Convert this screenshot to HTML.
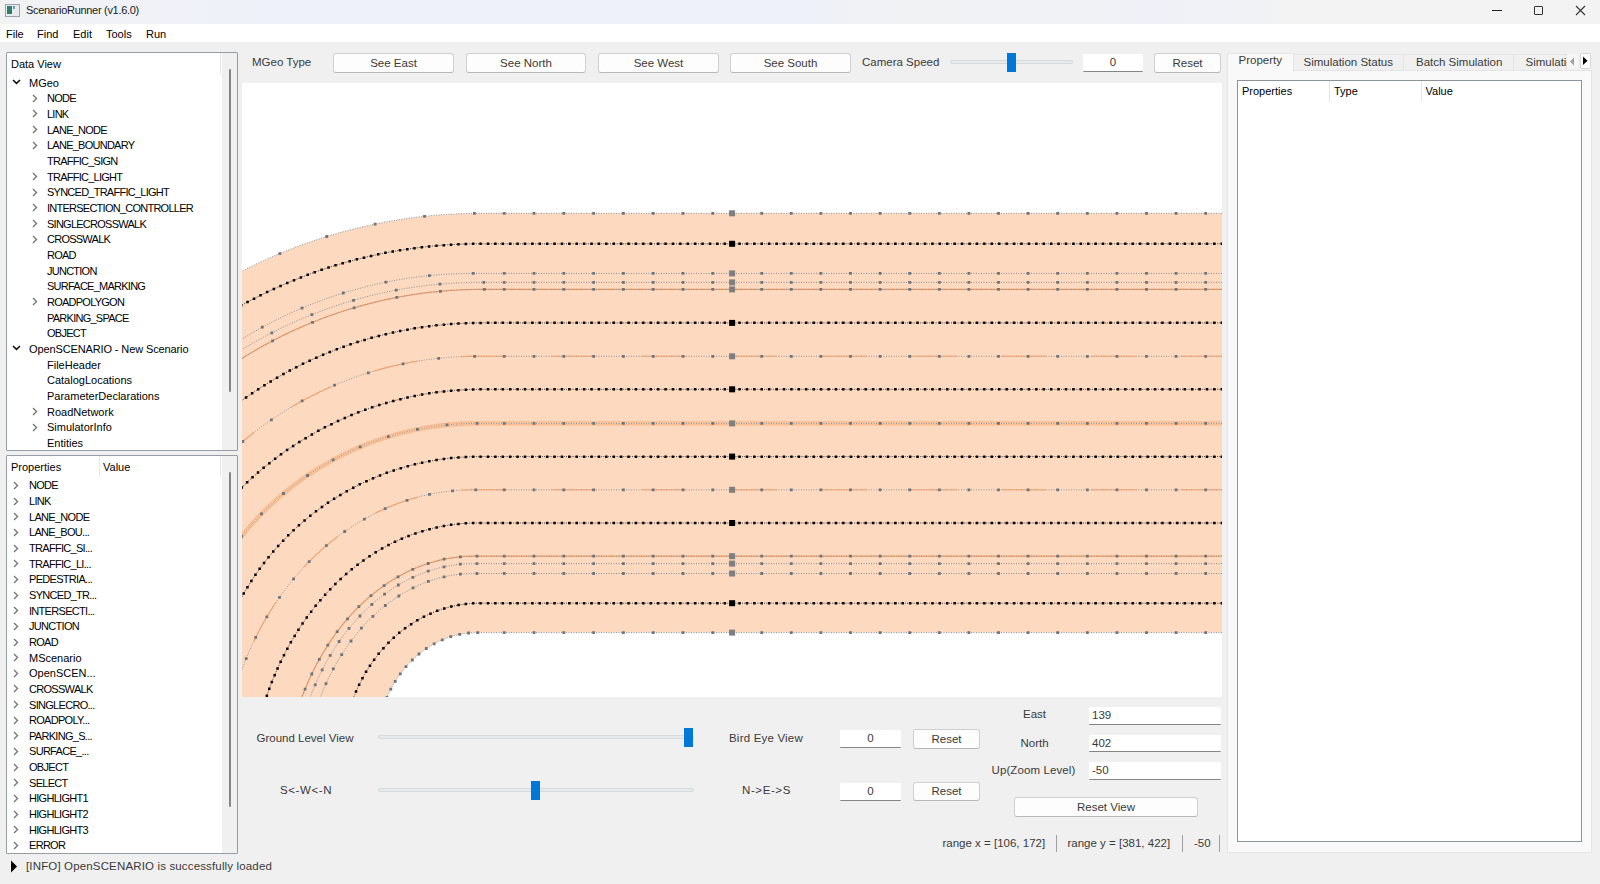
<!DOCTYPE html><html><head><meta charset="utf-8"><style>
html,body{margin:0;padding:0}
body{width:1600px;height:884px;position:relative;overflow:hidden;background:#f0f0f0;font-family:"Liberation Sans",sans-serif}
.t{position:absolute;white-space:nowrap;line-height:1;font-family:"Liberation Sans",sans-serif}
.btn{position:absolute;background:#fdfdfd;border:1px solid #d0d0d0;border-bottom-color:#b8b8b8;border-radius:3px;text-align:center;color:#3a3a3a;white-space:nowrap}
.le{position:absolute;background:#fff;border-bottom:1px solid #858585;border-radius:1px;font-size:11.5px;color:#3a3a3a;white-space:nowrap;box-sizing:content-box}
</style></head><body><div style="position:absolute;left:0;top:0;width:1600px;height:24px;background:linear-gradient(90deg,#f2f2f3 0px,#f0f2f7 90px,#eef1f9 300px,#eef1f9 800px,#f1f2f4 900px,#f1f2f5 1080px,#eff1f8 1150px,#f0f2f7 1220px,#f3f3f3 1300px)"></div>
<div style="position:absolute;left:5px;top:4px;width:13px;height:11px;border:1px solid #9aa3ab;background:#e8eaec"></div>
<div style="position:absolute;left:7px;top:6px;width:5px;height:8px;background:#2f7f6a"></div>
<div style="position:absolute;left:13px;top:6px;width:2px;height:3px;background:#5aa0d0"></div>
<div class="t" style="left:26px;top:5.34px;font-size:11px;color:#1a1a1a;letter-spacing:-0.3px">ScenarioRunner (v1.6.0)</div>
<div style="position:absolute;left:1492px;top:10px;width:10px;height:1px;background:#222"></div>
<div style="position:absolute;left:1534px;top:5.5px;width:7px;height:7px;border:1px solid #333;border-radius:1px"></div>
<svg style="position:absolute;left:1575px;top:4.5px" width="12" height="12"><path d="M1 1L10 10M10 1L1 10" stroke="#333" stroke-width="1.1"/></svg>
<div style="position:absolute;left:0;top:24px;width:1600px;height:18px;background:#fff"></div>
<div class="t" style="left:6px;top:29.24px;font-size:11px;color:#000;">File</div>
<div class="t" style="left:37px;top:29.24px;font-size:11px;color:#000;">Find</div>
<div class="t" style="left:73px;top:29.24px;font-size:11px;color:#000;">Edit</div>
<div class="t" style="left:106px;top:29.24px;font-size:11px;color:#000;">Tools</div>
<div class="t" style="left:146px;top:29.24px;font-size:11px;color:#000;">Run</div>
<div style="position:absolute;left:6px;top:52px;width:230px;height:397px;border:1px solid #979da5;border-radius:1px;background:#fff"></div>
<div style="position:absolute;left:222px;top:53px;width:15px;height:397px;background:#f0f0f0"></div>
<div style="position:absolute;left:229px;top:69px;width:2px;height:323px;background:#858585;border-radius:1px"></div>
<div style="position:absolute;left:220px;top:53px;width:1px;height:21px;background:#e6e6e6"></div>
<div style="position:absolute;left:6px;top:455px;width:230px;height:397px;border:1px solid #979da5;border-radius:1px;background:#fff"></div>
<div style="position:absolute;left:222px;top:456px;width:15px;height:397px;background:#f0f0f0"></div>
<div style="position:absolute;left:229px;top:472px;width:2px;height:335px;background:#858585;border-radius:1px"></div>
<div style="position:absolute;left:220px;top:456px;width:1px;height:21px;background:#e6e6e6"></div>
<div class="t" style="left:11px;top:58.64px;font-size:11px;color:#000;">Data View</div>
<div class="t" style="left:29px;top:77.54px;font-size:11px;color:#000;">MGeo</div>
<svg style="position:absolute;left:11.5px;top:79.0px" width="10" height="6"><path d="M1 1L4.5 4.3L8 1" stroke="#111" stroke-width="1.6" fill="none"/></svg>
<div class="t" style="left:47px;top:93.21px;font-size:11px;color:#000;letter-spacing:-0.75px">NODE</div>
<svg style="position:absolute;left:32px;top:94px" width="6" height="10"><path d="M1 1L4.5 4.5L1 8" stroke="#777" stroke-width="1.4" fill="none"/></svg>
<div class="t" style="left:47px;top:108.88px;font-size:11px;color:#000;letter-spacing:-0.75px">LINK</div>
<svg style="position:absolute;left:32px;top:109px" width="6" height="10"><path d="M1 1L4.5 4.5L1 8" stroke="#777" stroke-width="1.4" fill="none"/></svg>
<div class="t" style="left:47px;top:124.55px;font-size:11px;color:#000;letter-spacing:-0.75px">LANE_NODE</div>
<svg style="position:absolute;left:32px;top:125px" width="6" height="10"><path d="M1 1L4.5 4.5L1 8" stroke="#777" stroke-width="1.4" fill="none"/></svg>
<div class="t" style="left:47px;top:140.22px;font-size:11px;color:#000;letter-spacing:-0.75px">LANE_BOUNDARY</div>
<svg style="position:absolute;left:32px;top:141px" width="6" height="10"><path d="M1 1L4.5 4.5L1 8" stroke="#777" stroke-width="1.4" fill="none"/></svg>
<div class="t" style="left:47px;top:155.89px;font-size:11px;color:#000;letter-spacing:-0.75px">TRAFFIC_SIGN</div>
<div class="t" style="left:47px;top:171.56px;font-size:11px;color:#000;letter-spacing:-0.75px">TRAFFIC_LIGHT</div>
<svg style="position:absolute;left:32px;top:172px" width="6" height="10"><path d="M1 1L4.5 4.5L1 8" stroke="#777" stroke-width="1.4" fill="none"/></svg>
<div class="t" style="left:47px;top:187.23px;font-size:11px;color:#000;letter-spacing:-0.75px">SYNCED_TRAFFIC_LIGHT</div>
<svg style="position:absolute;left:32px;top:188px" width="6" height="10"><path d="M1 1L4.5 4.5L1 8" stroke="#777" stroke-width="1.4" fill="none"/></svg>
<div class="t" style="left:47px;top:202.90px;font-size:11px;color:#000;letter-spacing:-0.75px">INTERSECTION_CONTROLLER</div>
<svg style="position:absolute;left:32px;top:203px" width="6" height="10"><path d="M1 1L4.5 4.5L1 8" stroke="#777" stroke-width="1.4" fill="none"/></svg>
<div class="t" style="left:47px;top:218.57px;font-size:11px;color:#000;letter-spacing:-0.75px">SINGLECROSSWALK</div>
<svg style="position:absolute;left:32px;top:219px" width="6" height="10"><path d="M1 1L4.5 4.5L1 8" stroke="#777" stroke-width="1.4" fill="none"/></svg>
<div class="t" style="left:47px;top:234.24px;font-size:11px;color:#000;letter-spacing:-0.75px">CROSSWALK</div>
<svg style="position:absolute;left:32px;top:235px" width="6" height="10"><path d="M1 1L4.5 4.5L1 8" stroke="#777" stroke-width="1.4" fill="none"/></svg>
<div class="t" style="left:47px;top:249.91px;font-size:11px;color:#000;letter-spacing:-0.75px">ROAD</div>
<div class="t" style="left:47px;top:265.58px;font-size:11px;color:#000;letter-spacing:-0.75px">JUNCTION</div>
<div class="t" style="left:47px;top:281.25px;font-size:11px;color:#000;letter-spacing:-0.75px">SURFACE_MARKING</div>
<div class="t" style="left:47px;top:296.92px;font-size:11px;color:#000;letter-spacing:-0.75px">ROADPOLYGON</div>
<svg style="position:absolute;left:32px;top:297px" width="6" height="10"><path d="M1 1L4.5 4.5L1 8" stroke="#777" stroke-width="1.4" fill="none"/></svg>
<div class="t" style="left:47px;top:312.59px;font-size:11px;color:#000;letter-spacing:-0.75px">PARKING_SPACE</div>
<div class="t" style="left:47px;top:328.26px;font-size:11px;color:#000;letter-spacing:-0.75px">OBJECT</div>
<div class="t" style="left:29px;top:343.93px;font-size:11px;color:#000;letter-spacing:-0.12px">OpenSCENARIO - New Scenario</div>
<svg style="position:absolute;left:11.5px;top:345.39px" width="10" height="6"><path d="M1 1L4.5 4.3L8 1" stroke="#111" stroke-width="1.6" fill="none"/></svg>
<div class="t" style="left:47px;top:359.60px;font-size:11px;color:#000;">FileHeader</div>
<div class="t" style="left:47px;top:375.27px;font-size:11px;color:#000;">CatalogLocations</div>
<div class="t" style="left:47px;top:390.94px;font-size:11px;color:#000;">ParameterDeclarations</div>
<div class="t" style="left:47px;top:406.61px;font-size:11px;color:#000;">RoadNetwork</div>
<svg style="position:absolute;left:32px;top:407px" width="6" height="10"><path d="M1 1L4.5 4.5L1 8" stroke="#777" stroke-width="1.4" fill="none"/></svg>
<div class="t" style="left:47px;top:422.28px;font-size:11px;color:#000;">SimulatorInfo</div>
<svg style="position:absolute;left:32px;top:423px" width="6" height="10"><path d="M1 1L4.5 4.5L1 8" stroke="#777" stroke-width="1.4" fill="none"/></svg>
<div class="t" style="left:47px;top:437.95px;font-size:11px;color:#000;">Entities</div>
<div style="position:absolute;left:99px;top:456px;width:1px;height:21px;background:#e6e6e6"></div>
<div class="t" style="left:11px;top:462.04px;font-size:11px;color:#000;">Properties</div>
<div class="t" style="left:103px;top:462.04px;font-size:11px;color:#000;">Value</div>
<div class="t" style="left:29px;top:480.44px;font-size:11px;color:#000;letter-spacing:-0.7px">NODE</div>
<svg style="position:absolute;left:13px;top:481px" width="6" height="10"><path d="M1 1L4.5 4.5L1 8" stroke="#777" stroke-width="1.4" fill="none"/></svg>
<div class="t" style="left:29px;top:496.09px;font-size:11px;color:#000;letter-spacing:-0.7px">LINK</div>
<svg style="position:absolute;left:13px;top:497px" width="6" height="10"><path d="M1 1L4.5 4.5L1 8" stroke="#777" stroke-width="1.4" fill="none"/></svg>
<div class="t" style="left:29px;top:511.74px;font-size:11px;color:#000;letter-spacing:-0.7px">LANE_NODE</div>
<svg style="position:absolute;left:13px;top:512px" width="6" height="10"><path d="M1 1L4.5 4.5L1 8" stroke="#777" stroke-width="1.4" fill="none"/></svg>
<div class="t" style="left:29px;top:527.39px;font-size:11px;color:#000;letter-spacing:-0.7px">LANE_BOU...</div>
<svg style="position:absolute;left:13px;top:528px" width="6" height="10"><path d="M1 1L4.5 4.5L1 8" stroke="#777" stroke-width="1.4" fill="none"/></svg>
<div class="t" style="left:29px;top:543.04px;font-size:11px;color:#000;letter-spacing:-0.7px">TRAFFIC_SI...</div>
<svg style="position:absolute;left:13px;top:544px" width="6" height="10"><path d="M1 1L4.5 4.5L1 8" stroke="#777" stroke-width="1.4" fill="none"/></svg>
<div class="t" style="left:29px;top:558.69px;font-size:11px;color:#000;letter-spacing:-0.7px">TRAFFIC_LI...</div>
<svg style="position:absolute;left:13px;top:559px" width="6" height="10"><path d="M1 1L4.5 4.5L1 8" stroke="#777" stroke-width="1.4" fill="none"/></svg>
<div class="t" style="left:29px;top:574.34px;font-size:11px;color:#000;letter-spacing:-0.7px">PEDESTRIA...</div>
<svg style="position:absolute;left:13px;top:575px" width="6" height="10"><path d="M1 1L4.5 4.5L1 8" stroke="#777" stroke-width="1.4" fill="none"/></svg>
<div class="t" style="left:29px;top:589.99px;font-size:11px;color:#000;letter-spacing:-0.7px">SYNCED_TR...</div>
<svg style="position:absolute;left:13px;top:591px" width="6" height="10"><path d="M1 1L4.5 4.5L1 8" stroke="#777" stroke-width="1.4" fill="none"/></svg>
<div class="t" style="left:29px;top:605.64px;font-size:11px;color:#000;letter-spacing:-0.7px">INTERSECTI...</div>
<svg style="position:absolute;left:13px;top:606px" width="6" height="10"><path d="M1 1L4.5 4.5L1 8" stroke="#777" stroke-width="1.4" fill="none"/></svg>
<div class="t" style="left:29px;top:621.29px;font-size:11px;color:#000;letter-spacing:-0.7px">JUNCTION</div>
<svg style="position:absolute;left:13px;top:622px" width="6" height="10"><path d="M1 1L4.5 4.5L1 8" stroke="#777" stroke-width="1.4" fill="none"/></svg>
<div class="t" style="left:29px;top:636.94px;font-size:11px;color:#000;letter-spacing:-0.7px">ROAD</div>
<svg style="position:absolute;left:13px;top:638px" width="6" height="10"><path d="M1 1L4.5 4.5L1 8" stroke="#777" stroke-width="1.4" fill="none"/></svg>
<div class="t" style="left:29px;top:652.59px;font-size:11px;color:#000;">MScenario</div>
<svg style="position:absolute;left:13px;top:653px" width="6" height="10"><path d="M1 1L4.5 4.5L1 8" stroke="#777" stroke-width="1.4" fill="none"/></svg>
<div class="t" style="left:29px;top:668.24px;font-size:11px;color:#000;">OpenSCEN...</div>
<svg style="position:absolute;left:13px;top:669px" width="6" height="10"><path d="M1 1L4.5 4.5L1 8" stroke="#777" stroke-width="1.4" fill="none"/></svg>
<div class="t" style="left:29px;top:683.89px;font-size:11px;color:#000;letter-spacing:-0.7px">CROSSWALK</div>
<svg style="position:absolute;left:13px;top:684px" width="6" height="10"><path d="M1 1L4.5 4.5L1 8" stroke="#777" stroke-width="1.4" fill="none"/></svg>
<div class="t" style="left:29px;top:699.54px;font-size:11px;color:#000;letter-spacing:-0.7px">SINGLECRO...</div>
<svg style="position:absolute;left:13px;top:700px" width="6" height="10"><path d="M1 1L4.5 4.5L1 8" stroke="#777" stroke-width="1.4" fill="none"/></svg>
<div class="t" style="left:29px;top:715.19px;font-size:11px;color:#000;letter-spacing:-0.7px">ROADPOLY...</div>
<svg style="position:absolute;left:13px;top:716px" width="6" height="10"><path d="M1 1L4.5 4.5L1 8" stroke="#777" stroke-width="1.4" fill="none"/></svg>
<div class="t" style="left:29px;top:730.84px;font-size:11px;color:#000;letter-spacing:-0.7px">PARKING_S...</div>
<svg style="position:absolute;left:13px;top:731px" width="6" height="10"><path d="M1 1L4.5 4.5L1 8" stroke="#777" stroke-width="1.4" fill="none"/></svg>
<div class="t" style="left:29px;top:746.49px;font-size:11px;color:#000;letter-spacing:-0.7px">SURFACE_...</div>
<svg style="position:absolute;left:13px;top:747px" width="6" height="10"><path d="M1 1L4.5 4.5L1 8" stroke="#777" stroke-width="1.4" fill="none"/></svg>
<div class="t" style="left:29px;top:762.14px;font-size:11px;color:#000;letter-spacing:-0.7px">OBJECT</div>
<svg style="position:absolute;left:13px;top:763px" width="6" height="10"><path d="M1 1L4.5 4.5L1 8" stroke="#777" stroke-width="1.4" fill="none"/></svg>
<div class="t" style="left:29px;top:777.79px;font-size:11px;color:#000;letter-spacing:-0.7px">SELECT</div>
<svg style="position:absolute;left:13px;top:778px" width="6" height="10"><path d="M1 1L4.5 4.5L1 8" stroke="#777" stroke-width="1.4" fill="none"/></svg>
<div class="t" style="left:29px;top:793.44px;font-size:11px;color:#000;letter-spacing:-0.7px">HIGHLIGHT1</div>
<svg style="position:absolute;left:13px;top:794px" width="6" height="10"><path d="M1 1L4.5 4.5L1 8" stroke="#777" stroke-width="1.4" fill="none"/></svg>
<div class="t" style="left:29px;top:809.09px;font-size:11px;color:#000;letter-spacing:-0.7px">HIGHLIGHT2</div>
<svg style="position:absolute;left:13px;top:810px" width="6" height="10"><path d="M1 1L4.5 4.5L1 8" stroke="#777" stroke-width="1.4" fill="none"/></svg>
<div class="t" style="left:29px;top:824.74px;font-size:11px;color:#000;letter-spacing:-0.7px">HIGHLIGHT3</div>
<svg style="position:absolute;left:13px;top:825px" width="6" height="10"><path d="M1 1L4.5 4.5L1 8" stroke="#777" stroke-width="1.4" fill="none"/></svg>
<div class="t" style="left:29px;top:840.39px;font-size:11px;color:#000;letter-spacing:-0.7px">ERROR</div>
<svg style="position:absolute;left:13px;top:841px" width="6" height="10"><path d="M1 1L4.5 4.5L1 8" stroke="#777" stroke-width="1.4" fill="none"/></svg>
<svg style="position:absolute;left:10px;top:860px" width="9" height="13"><path d="M1 0.5L7 6.5L1 12.5Z" fill="#000"/></svg>
<div class="t" style="left:26px;top:860.59px;font-size:11.5px;color:#3a3a3a;letter-spacing:0.15px">[INFO] OpenSCENARIO is successfully loaded</div>
<div class="t" style="left:252px;top:56.59px;font-size:11.5px;color:#3a3a3a;">MGeo Type</div>
<div class="btn" style="left:333px;top:53px;width:119px;height:18px;line-height:18px;font-size:11.5px">See East</div>
<div class="btn" style="left:466px;top:53px;width:118px;height:18px;line-height:18px;font-size:11.5px">See North</div>
<div class="btn" style="left:598px;top:53px;width:119px;height:18px;line-height:18px;font-size:11.5px">See West</div>
<div class="btn" style="left:730px;top:53px;width:119px;height:18px;line-height:18px;font-size:11.5px">See South</div>
<div class="t" style="left:862px;top:56.59px;font-size:11.5px;color:#3a3a3a;">Camera Speed</div>
<div style="position:absolute;left:950px;top:60px;width:121px;height:2px;border:1px solid #d6d9dc;background:#e7eaea;border-radius:2px"></div><div style="position:absolute;left:1006.5px;top:52.5px;width:9px;height:19px;background:#0078d7"></div>
<div class="le" style="left:1083px;top:54px;width:60px;height:17px;line-height:17px;text-align:center;padding-left:0px">0</div>
<div class="btn" style="left:1154px;top:53px;width:65px;height:18px;line-height:18px;font-size:11.5px">Reset</div>
<div style="position:absolute;left:242px;top:83px;width:980px;height:614px;background:#fff;overflow:hidden">
<svg width="980" height="614" viewBox="242 83 980 614" style="position:absolute;left:0;top:0;display:block"><path d="M1222.0 213.3 L480.4 213.3 L478.4 213.3 L476.4 213.3 L474.4 213.3 L472.4 213.4 L470.4 213.4 L468.4 213.4 L466.4 213.5 L464.4 213.5 L462.4 213.6 L460.4 213.7 L458.4 213.8 L456.4 213.9 L454.4 214.0 L452.4 214.1 L450.4 214.2 L448.4 214.3 L446.4 214.4 L444.4 214.5 L442.4 214.7 L440.4 214.8 L438.4 215.0 L436.5 215.2 L434.5 215.3 L432.5 215.5 L430.5 215.7 L428.5 215.9 L426.5 216.1 L424.5 216.3 L422.5 216.5 L420.5 216.8 L418.5 217.0 L416.6 217.2 L414.6 217.5 L412.6 217.7 L410.6 218.0 L408.6 218.3 L406.6 218.6 L404.7 218.8 L402.7 219.1 L400.7 219.4 L398.7 219.8 L396.8 220.1 L394.8 220.4 L392.8 220.7 L390.8 221.1 L388.9 221.4 L386.9 221.8 L384.9 222.1 L383.0 222.5 L381.0 222.9 L379.1 223.3 L377.1 223.7 L375.1 224.1 L373.2 224.5 L371.2 224.9 L369.3 225.3 L367.3 225.8 L365.4 226.2 L363.4 226.6 L361.5 227.1 L359.5 227.6 L357.6 228.0 L355.6 228.5 L353.7 229.0 L351.8 229.5 L349.8 230.0 L347.9 230.5 L345.9 231.0 L344.0 231.5 L342.1 232.0 L340.2 232.6 L338.2 233.1 L336.3 233.7 L334.4 234.2 L332.5 234.8 L330.6 235.4 L328.6 235.9 L326.7 236.5 L324.8 237.1 L322.9 237.7 L321.0 238.3 L319.1 239.0 L317.2 239.6 L315.3 240.2 L313.4 240.9 L311.5 241.5 L309.6 242.2 L307.7 242.8 L305.9 243.5 L304.0 244.2 L302.1 244.8 L300.2 245.5 L298.3 246.2 L296.5 246.9 L294.6 247.6 L292.7 248.4 L290.9 249.1 L289.0 249.8 L287.2 250.6 L285.3 251.3 L283.4 252.1 L281.6 252.8 L279.8 253.6 L277.9 254.4 L276.1 255.1 L274.2 255.9 L272.4 256.7 L270.6 257.5 L268.7 258.3 L266.9 259.2 L265.1 260.0 L263.3 260.8 L261.5 261.7 L259.6 262.5 L257.8 263.4 L256.0 264.2 L254.2 265.1 L252.4 266.0 L250.6 266.8 L248.8 267.7 L247.0 268.6 L245.3 269.5 L243.5 270.4 L241.7 271.3 L239.9 272.3 L238.2 273.2 L236.4 274.1 L234.6 275.1 L232.9 276.0 L231.1 277.0 L229.9 277.6 L230.0 709.0 L382.5 709.0 L382.6 708.9 L383.2 707.0 L383.9 705.1 L384.6 703.2 L385.3 701.3 L386.0 699.5 L386.8 697.6 L387.6 695.8 L388.4 694.0 L389.3 692.2 L390.2 690.4 L391.1 688.6 L392.0 686.8 L393.0 685.1 L394.0 683.4 L395.0 681.6 L396.1 679.9 L397.2 678.3 L398.3 676.6 L399.5 675.0 L400.6 673.4 L401.8 671.8 L403.1 670.2 L404.3 668.6 L405.6 667.1 L406.9 665.6 L408.3 664.1 L409.7 662.7 L411.0 661.2 L412.5 659.8 L413.9 658.4 L415.4 657.1 L416.9 655.8 L418.4 654.5 L420.0 653.2 L421.6 652.0 L423.2 650.8 L424.8 649.6 L426.4 648.5 L428.1 647.4 L429.8 646.3 L431.5 645.3 L433.2 644.3 L435.0 643.3 L436.8 642.4 L438.6 641.5 L440.4 640.7 L442.2 639.9 L444.0 639.1 L445.9 638.4 L447.8 637.7 L449.7 637.0 L451.6 636.4 L453.5 635.9 L455.4 635.4 L457.4 634.9 L459.3 634.4 L461.3 634.1 L463.3 633.7 L465.2 633.4 L467.2 633.2 L469.2 633.0 L471.2 632.8 L473.2 632.7 L475.2 632.6 L477.2 632.6 L1222.0 632.6 Z" fill="#fdd9bf"/><path d="M1227.0 213.3 L480.4 213.3 L478.4 213.3 L476.4 213.3 L474.4 213.3 L472.4 213.4 L470.4 213.4 L468.4 213.4 L466.4 213.5 L464.4 213.5 L462.4 213.6 L460.4 213.7 L458.4 213.8 L456.4 213.9 L454.4 214.0 L452.4 214.1 L450.4 214.2 L448.4 214.3 L446.4 214.4 L444.4 214.5 L442.4 214.7 L440.4 214.8 L438.4 215.0 L436.5 215.2 L434.5 215.3 L432.5 215.5 L430.5 215.7 L428.5 215.9 L426.5 216.1 L424.5 216.3 L422.5 216.5 L420.5 216.8 L418.5 217.0 L416.6 217.2 L414.6 217.5 L412.6 217.7 L410.6 218.0 L408.6 218.3 L406.6 218.6 L404.7 218.8 L402.7 219.1 L400.7 219.4 L398.7 219.8 L396.8 220.1 L394.8 220.4 L392.8 220.7 L390.8 221.1 L388.9 221.4 L386.9 221.8 L384.9 222.1 L383.0 222.5 L381.0 222.9 L379.1 223.3 L377.1 223.7 L375.1 224.1 L373.2 224.5 L371.2 224.9 L369.3 225.3 L367.3 225.8 L365.4 226.2 L363.4 226.6 L361.5 227.1 L359.5 227.6 L357.6 228.0 L355.6 228.5 L353.7 229.0 L351.8 229.5 L349.8 230.0 L347.9 230.5 L345.9 231.0 L344.0 231.5 L342.1 232.0 L340.2 232.6 L338.2 233.1 L336.3 233.7 L334.4 234.2 L332.5 234.8 L330.6 235.4 L328.6 235.9 L326.7 236.5 L324.8 237.1 L322.9 237.7 L321.0 238.3 L319.1 239.0 L317.2 239.6 L315.3 240.2 L313.4 240.9 L311.5 241.5 L309.6 242.2 L307.7 242.8 L305.9 243.5 L304.0 244.2 L302.1 244.8 L300.2 245.5 L298.3 246.2 L296.5 246.9 L294.6 247.6 L292.7 248.4 L290.9 249.1 L289.0 249.8 L287.2 250.6 L285.3 251.3 L283.4 252.1 L281.6 252.8 L279.8 253.6 L277.9 254.4 L276.1 255.1 L274.2 255.9 L272.4 256.7 L270.6 257.5 L268.7 258.3 L266.9 259.2 L265.1 260.0 L263.3 260.8 L261.5 261.7 L259.6 262.5 L257.8 263.4 L256.0 264.2 L254.2 265.1 L252.4 266.0 L250.6 266.8 L248.8 267.7 L247.0 268.6 L245.3 269.5 L243.5 270.4 L241.7 271.3 L239.9 272.3 L238.2 273.2 L236.4 274.1 L234.6 275.1 L232.9 276.0 L231.1 277.0 L229.9 277.6" fill="none" stroke="#6a7a88" stroke-width="1" stroke-dasharray="1 1.5" opacity="0.8"/><path fill="#6c747c" d="M760.3 211.9h2.8v2.8h-2.8zM789.9 211.9h2.8v2.8h-2.8zM819.5 211.9h2.8v2.8h-2.8zM849.1 211.9h2.8v2.8h-2.8zM878.7 211.9h2.8v2.8h-2.8zM908.3 211.9h2.8v2.8h-2.8zM937.9 211.9h2.8v2.8h-2.8zM967.5 211.9h2.8v2.8h-2.8zM997.1 211.9h2.8v2.8h-2.8zM1026.7 211.9h2.8v2.8h-2.8zM1056.3 211.9h2.8v2.8h-2.8zM1085.9 211.9h2.8v2.8h-2.8zM1115.5 211.9h2.8v2.8h-2.8zM1145.1 211.9h2.8v2.8h-2.8zM1174.7 211.9h2.8v2.8h-2.8zM1204.3 211.9h2.8v2.8h-2.8zM711.4 211.9h2.8v2.8h-2.8zM681.6 211.9h2.8v2.8h-2.8zM651.8 211.9h2.8v2.8h-2.8zM622.0 211.9h2.8v2.8h-2.8zM592.2 211.9h2.8v2.8h-2.8zM562.4 211.9h2.8v2.8h-2.8zM532.6 211.9h2.8v2.8h-2.8zM502.8 211.9h2.8v2.8h-2.8zM473.0 211.9h2.8v2.8h-2.8zM423.1 214.9h2.8v2.8h-2.8zM373.7 222.7h2.8v2.8h-2.8zM325.3 235.1h2.8v2.8h-2.8zM278.4 252.2h2.8v2.8h-2.8z"/><rect x="729.1" y="210.3" width="6" height="6" fill="#7f7f7f"/><path d="M1227.0 243.8 L479.6 243.8 L477.6 243.8 L475.6 243.8 L473.6 243.8 L471.6 243.9 L469.6 243.9 L467.6 243.9 L465.6 244.0 L463.6 244.1 L461.6 244.1 L459.6 244.2 L457.6 244.3 L455.6 244.4 L453.6 244.5 L451.6 244.6 L449.6 244.7 L447.6 244.8 L445.6 245.0 L443.6 245.1 L441.6 245.3 L439.6 245.4 L437.7 245.6 L435.7 245.8 L433.7 246.0 L431.7 246.1 L429.7 246.3 L427.7 246.5 L425.7 246.8 L423.7 247.0 L421.7 247.2 L419.7 247.5 L417.8 247.7 L415.8 248.0 L413.8 248.2 L411.8 248.5 L409.8 248.8 L407.9 249.1 L405.9 249.4 L403.9 249.7 L401.9 250.0 L400.0 250.3 L398.0 250.6 L396.0 251.0 L394.0 251.3 L392.1 251.7 L390.1 252.0 L388.1 252.4 L386.2 252.8 L384.2 253.1 L382.2 253.5 L380.3 253.9 L378.3 254.4 L376.4 254.8 L374.4 255.2 L372.5 255.6 L370.5 256.1 L368.6 256.5 L366.6 257.0 L364.7 257.4 L362.7 257.9 L360.8 258.4 L358.8 258.9 L356.9 259.4 L355.0 259.9 L353.0 260.4 L351.1 260.9 L349.2 261.4 L347.3 262.0 L345.3 262.5 L343.4 263.1 L341.5 263.6 L339.6 264.2 L337.7 264.8 L335.7 265.3 L333.8 265.9 L331.9 266.5 L330.0 267.1 L328.1 267.7 L326.2 268.4 L324.3 269.0 L322.4 269.6 L320.5 270.3 L318.6 270.9 L316.7 271.6 L314.9 272.2 L313.0 272.9 L311.1 273.6 L309.2 274.3 L307.3 275.0 L305.5 275.7 L303.6 276.4 L301.7 277.1 L299.9 277.9 L298.0 278.6 L296.2 279.3 L294.3 280.1 L292.5 280.8 L290.6 281.6 L288.8 282.4 L286.9 283.2 L285.1 283.9 L283.2 284.7 L281.4 285.5 L279.6 286.4 L277.8 287.2 L275.9 288.0 L274.1 288.8 L272.3 289.7 L270.5 290.5 L268.7 291.4 L266.9 292.2 L265.1 293.1 L263.3 294.0 L261.5 294.9 L259.7 295.8 L257.9 296.7 L256.1 297.6 L254.3 298.5 L252.6 299.4 L250.8 300.3 L249.0 301.3 L247.3 302.2 L245.5 303.2 L243.8 304.1 L242.0 305.1 L240.3 306.0 L238.5 307.0 L236.8 308.0 L235.0 309.0 L233.3 310.0 L231.6 311.0 L229.9 312.0" fill="none" stroke="#000" stroke-width="1" stroke-dasharray="1 1.2" opacity="0.7"/><path fill="#000" d="M730.9 242.6h2.5v2.5h-2.5zM738.3 242.6h2.5v2.5h-2.5zM745.7 242.6h2.5v2.5h-2.5zM753.1 242.6h2.5v2.5h-2.5zM760.5 242.6h2.5v2.5h-2.5zM767.9 242.6h2.5v2.5h-2.5zM775.4 242.6h2.5v2.5h-2.5zM782.8 242.6h2.5v2.5h-2.5zM790.2 242.6h2.5v2.5h-2.5zM797.6 242.6h2.5v2.5h-2.5zM805.0 242.6h2.5v2.5h-2.5zM812.5 242.6h2.5v2.5h-2.5zM819.9 242.6h2.5v2.5h-2.5zM827.3 242.6h2.5v2.5h-2.5zM834.7 242.6h2.5v2.5h-2.5zM842.1 242.6h2.5v2.5h-2.5zM849.6 242.6h2.5v2.5h-2.5zM857.0 242.6h2.5v2.5h-2.5zM864.4 242.6h2.5v2.5h-2.5zM871.8 242.6h2.5v2.5h-2.5zM879.2 242.6h2.5v2.5h-2.5zM886.7 242.6h2.5v2.5h-2.5zM894.1 242.6h2.5v2.5h-2.5zM901.5 242.6h2.5v2.5h-2.5zM908.9 242.6h2.5v2.5h-2.5zM916.3 242.6h2.5v2.5h-2.5zM923.8 242.6h2.5v2.5h-2.5zM931.2 242.6h2.5v2.5h-2.5zM938.6 242.6h2.5v2.5h-2.5zM946.0 242.6h2.5v2.5h-2.5zM953.4 242.6h2.5v2.5h-2.5zM960.9 242.6h2.5v2.5h-2.5zM968.3 242.6h2.5v2.5h-2.5zM975.7 242.6h2.5v2.5h-2.5zM983.1 242.6h2.5v2.5h-2.5zM990.5 242.6h2.5v2.5h-2.5zM998.0 242.6h2.5v2.5h-2.5zM1005.4 242.6h2.5v2.5h-2.5zM1012.8 242.6h2.5v2.5h-2.5zM1020.2 242.6h2.5v2.5h-2.5zM1027.6 242.6h2.5v2.5h-2.5zM1035.1 242.6h2.5v2.5h-2.5zM1042.5 242.6h2.5v2.5h-2.5zM1049.9 242.6h2.5v2.5h-2.5zM1057.3 242.6h2.5v2.5h-2.5zM1064.7 242.6h2.5v2.5h-2.5zM1072.2 242.6h2.5v2.5h-2.5zM1079.6 242.6h2.5v2.5h-2.5zM1087.0 242.6h2.5v2.5h-2.5zM1094.4 242.6h2.5v2.5h-2.5zM1101.8 242.6h2.5v2.5h-2.5zM1109.3 242.6h2.5v2.5h-2.5zM1116.7 242.6h2.5v2.5h-2.5zM1124.1 242.6h2.5v2.5h-2.5zM1131.5 242.6h2.5v2.5h-2.5zM1138.9 242.6h2.5v2.5h-2.5zM1146.4 242.6h2.5v2.5h-2.5zM1153.8 242.6h2.5v2.5h-2.5zM1161.2 242.6h2.5v2.5h-2.5zM1168.6 242.6h2.5v2.5h-2.5zM1176.0 242.6h2.5v2.5h-2.5zM1183.5 242.6h2.5v2.5h-2.5zM1190.9 242.6h2.5v2.5h-2.5zM1198.3 242.6h2.5v2.5h-2.5zM1205.7 242.6h2.5v2.5h-2.5zM1213.1 242.6h2.5v2.5h-2.5zM1220.6 242.6h2.5v2.5h-2.5zM723.5 242.6h2.5v2.5h-2.5zM716.1 242.6h2.5v2.5h-2.5zM708.7 242.6h2.5v2.5h-2.5zM701.3 242.6h2.5v2.5h-2.5zM693.9 242.6h2.5v2.5h-2.5zM686.5 242.6h2.5v2.5h-2.5zM679.1 242.6h2.5v2.5h-2.5zM671.7 242.6h2.5v2.5h-2.5zM664.3 242.6h2.5v2.5h-2.5zM656.9 242.6h2.5v2.5h-2.5zM649.5 242.6h2.5v2.5h-2.5zM642.1 242.6h2.5v2.5h-2.5zM634.7 242.6h2.5v2.5h-2.5zM627.3 242.6h2.5v2.5h-2.5zM619.9 242.6h2.5v2.5h-2.5zM612.5 242.6h2.5v2.5h-2.5zM605.1 242.6h2.5v2.5h-2.5zM597.7 242.6h2.5v2.5h-2.5zM590.3 242.6h2.5v2.5h-2.5zM582.9 242.6h2.5v2.5h-2.5zM575.5 242.6h2.5v2.5h-2.5zM568.1 242.6h2.5v2.5h-2.5zM560.7 242.6h2.5v2.5h-2.5zM553.3 242.6h2.5v2.5h-2.5zM545.9 242.6h2.5v2.5h-2.5zM538.5 242.6h2.5v2.5h-2.5zM531.1 242.6h2.5v2.5h-2.5zM523.7 242.6h2.5v2.5h-2.5zM516.3 242.6h2.5v2.5h-2.5zM508.9 242.6h2.5v2.5h-2.5zM501.5 242.6h2.5v2.5h-2.5zM494.1 242.6h2.5v2.5h-2.5zM486.7 242.6h2.5v2.5h-2.5zM479.3 242.6h2.5v2.5h-2.5zM471.9 242.6h2.5v2.5h-2.5zM464.5 242.7h2.5v2.5h-2.5zM457.2 243.0h2.5v2.5h-2.5zM449.8 243.4h2.5v2.5h-2.5zM442.5 243.9h2.5v2.5h-2.5zM435.2 244.5h2.5v2.5h-2.5zM427.8 245.2h2.5v2.5h-2.5zM420.5 246.0h2.5v2.5h-2.5zM413.2 246.9h2.5v2.5h-2.5zM406.0 247.9h2.5v2.5h-2.5zM398.7 249.0h2.5v2.5h-2.5zM391.5 250.3h2.5v2.5h-2.5zM384.2 251.6h2.5v2.5h-2.5zM377.0 253.1h2.5v2.5h-2.5zM369.9 254.7h2.5v2.5h-2.5zM362.7 256.4h2.5v2.5h-2.5zM355.6 258.1h2.5v2.5h-2.5zM348.5 260.0h2.5v2.5h-2.5zM341.4 262.0h2.5v2.5h-2.5zM334.3 264.1h2.5v2.5h-2.5zM327.3 266.3h2.5v2.5h-2.5zM320.4 268.6h2.5v2.5h-2.5zM313.4 271.1h2.5v2.5h-2.5zM306.5 273.6h2.5v2.5h-2.5zM299.6 276.2h2.5v2.5h-2.5zM292.8 278.9h2.5v2.5h-2.5zM286.0 281.8h2.5v2.5h-2.5zM279.3 284.7h2.5v2.5h-2.5zM272.6 287.7h2.5v2.5h-2.5zM265.9 290.8h2.5v2.5h-2.5zM259.3 294.1h2.5v2.5h-2.5zM252.8 297.4h2.5v2.5h-2.5zM246.3 300.8h2.5v2.5h-2.5zM239.8 304.3h2.5v2.5h-2.5z"/><rect x="729.1" y="240.8" width="6" height="6" fill="#000"/><path d="M1227.0 273.4 L473.3 273.4 L471.3 273.4 L469.3 273.4 L467.3 273.4 L465.3 273.5 L463.3 273.5 L461.3 273.6 L459.3 273.6 L457.3 273.7 L455.3 273.8 L453.3 273.9 L451.3 273.9 L449.3 274.1 L447.3 274.2 L445.3 274.3 L443.3 274.4 L441.3 274.6 L439.3 274.7 L437.3 274.9 L435.3 275.0 L433.4 275.2 L431.4 275.4 L429.4 275.6 L427.4 275.8 L425.4 276.0 L423.4 276.2 L421.4 276.5 L419.4 276.7 L417.5 277.0 L415.5 277.2 L413.5 277.5 L411.5 277.8 L409.5 278.0 L407.5 278.3 L405.6 278.6 L403.6 279.0 L401.6 279.3 L399.6 279.6 L397.7 279.9 L395.7 280.3 L393.7 280.6 L391.8 281.0 L389.8 281.4 L387.8 281.8 L385.9 282.2 L383.9 282.6 L382.0 283.0 L380.0 283.4 L378.1 283.8 L376.1 284.3 L374.2 284.7 L372.2 285.2 L370.3 285.6 L368.3 286.1 L366.4 286.6 L364.4 287.1 L362.5 287.6 L360.6 288.1 L358.6 288.6 L356.7 289.1 L354.8 289.7 L352.9 290.2 L350.9 290.7 L349.0 291.3 L347.1 291.9 L345.2 292.5 L343.3 293.0 L341.4 293.6 L339.5 294.2 L337.5 294.9 L335.6 295.5 L333.7 296.1 L331.9 296.7 L330.0 297.4 L328.1 298.0 L326.2 298.7 L324.3 299.4 L322.4 300.1 L320.5 300.8 L318.7 301.5 L316.8 302.2 L314.9 302.9 L313.1 303.6 L311.2 304.3 L309.3 305.1 L307.5 305.8 L305.6 306.6 L303.8 307.3 L302.0 308.1 L300.1 308.9 L298.3 309.7 L296.4 310.5 L294.6 311.3 L292.8 312.1 L291.0 312.9 L289.1 313.8 L287.3 314.6 L285.5 315.5 L283.7 316.3 L281.9 317.2 L280.1 318.1 L278.3 318.9 L276.5 319.8 L274.7 320.7 L273.0 321.6 L271.2 322.5 L269.4 323.5 L267.6 324.4 L265.9 325.3 L264.1 326.3 L262.3 327.2 L260.6 328.2 L258.8 329.2 L257.1 330.2 L255.4 331.1 L253.6 332.1 L251.9 333.1 L250.2 334.1 L248.4 335.2 L246.7 336.2 L245.0 337.2 L243.3 338.3 L241.6 339.3 L239.9 340.4 L238.2 341.4 L236.5 342.5 L234.8 343.6 L233.2 344.7 L231.5 345.8 L230.0 346.8" fill="none" stroke="#6a7a88" stroke-width="1" stroke-dasharray="1 1.5" opacity="0.8"/><path fill="#6c747c" d="M760.3 272.0h2.8v2.8h-2.8zM789.9 272.0h2.8v2.8h-2.8zM819.5 272.0h2.8v2.8h-2.8zM849.1 272.0h2.8v2.8h-2.8zM878.7 272.0h2.8v2.8h-2.8zM908.3 272.0h2.8v2.8h-2.8zM937.9 272.0h2.8v2.8h-2.8zM967.5 272.0h2.8v2.8h-2.8zM997.1 272.0h2.8v2.8h-2.8zM1026.7 272.0h2.8v2.8h-2.8zM1056.3 272.0h2.8v2.8h-2.8zM1085.9 272.0h2.8v2.8h-2.8zM1115.5 272.0h2.8v2.8h-2.8zM1145.1 272.0h2.8v2.8h-2.8zM1174.7 272.0h2.8v2.8h-2.8zM1204.3 272.0h2.8v2.8h-2.8zM711.4 272.0h2.8v2.8h-2.8zM681.6 272.0h2.8v2.8h-2.8zM651.8 272.0h2.8v2.8h-2.8zM622.0 272.0h2.8v2.8h-2.8zM592.2 272.0h2.8v2.8h-2.8zM562.4 272.0h2.8v2.8h-2.8zM532.6 272.0h2.8v2.8h-2.8zM502.8 272.0h2.8v2.8h-2.8zM471.9 272.0h2.8v2.8h-2.8zM428.0 274.2h2.8v2.8h-2.8zM384.5 280.8h2.8v2.8h-2.8zM341.9 291.6h2.8v2.8h-2.8zM300.6 306.7h2.8v2.8h-2.8zM260.9 325.8h2.8v2.8h-2.8z"/><rect x="729.1" y="270.4" width="6" height="6" fill="#7f7f7f"/><path d="M1227.0 282.4 L479.8 282.4 L477.8 282.4 L475.8 282.4 L473.8 282.4 L471.8 282.5 L469.8 282.5 L467.8 282.6 L465.8 282.6 L463.8 282.7 L461.8 282.8 L459.8 282.8 L457.8 282.9 L455.8 283.0 L453.8 283.1 L451.8 283.3 L449.8 283.4 L447.8 283.5 L445.8 283.7 L443.8 283.8 L441.8 284.0 L439.9 284.2 L437.9 284.3 L435.9 284.5 L433.9 284.7 L431.9 284.9 L429.9 285.1 L427.9 285.4 L425.9 285.6 L423.9 285.8 L422.0 286.1 L420.0 286.4 L418.0 286.6 L416.0 286.9 L414.0 287.2 L412.1 287.5 L410.1 287.8 L408.1 288.1 L406.1 288.4 L404.2 288.7 L402.2 289.1 L400.2 289.4 L398.2 289.8 L396.3 290.1 L394.3 290.5 L392.3 290.9 L390.4 291.3 L388.4 291.7 L386.5 292.1 L384.5 292.5 L382.6 292.9 L380.6 293.4 L378.7 293.8 L376.7 294.2 L374.8 294.7 L372.8 295.2 L370.9 295.6 L368.9 296.1 L367.0 296.6 L365.1 297.1 L363.1 297.6 L361.2 298.1 L359.3 298.7 L357.3 299.2 L355.4 299.8 L353.5 300.3 L351.6 300.9 L349.6 301.4 L347.7 302.0 L345.8 302.6 L343.9 303.2 L342.0 303.8 L340.1 304.4 L338.2 305.0 L336.3 305.6 L334.4 306.3 L332.5 306.9 L330.6 307.6 L328.7 308.2 L326.8 308.9 L325.0 309.6 L323.1 310.3 L321.2 311.0 L319.3 311.7 L317.5 312.4 L315.6 313.1 L313.7 313.8 L311.9 314.6 L310.0 315.3 L308.2 316.1 L306.3 316.8 L304.5 317.6 L302.6 318.4 L300.8 319.1 L298.9 319.9 L297.1 320.7 L295.3 321.5 L293.5 322.4 L291.6 323.2 L289.8 324.0 L288.0 324.9 L286.2 325.7 L284.4 326.6 L282.6 327.4 L280.8 328.3 L279.0 329.2 L277.2 330.1 L275.4 331.0 L273.6 331.9 L271.8 332.8 L270.1 333.7 L268.3 334.6 L266.5 335.5 L264.8 336.5 L263.0 337.4 L261.2 338.4 L259.5 339.4 L257.7 340.3 L256.0 341.3 L254.3 342.3 L252.5 343.3 L250.8 344.3 L249.1 345.3 L247.4 346.3 L245.6 347.4 L243.9 348.4 L242.2 349.4 L240.5 350.5 L238.8 351.5 L237.1 352.6 L235.4 353.7 L233.8 354.8 L232.1 355.8 L230.4 356.9 L229.9 357.3" fill="none" stroke="#6a7a88" stroke-width="1" stroke-dasharray="1 1.5" opacity="0.8"/><path fill="#6c747c" d="M760.3 281.0h2.8v2.8h-2.8zM789.9 281.0h2.8v2.8h-2.8zM819.5 281.0h2.8v2.8h-2.8zM849.1 281.0h2.8v2.8h-2.8zM878.7 281.0h2.8v2.8h-2.8zM908.3 281.0h2.8v2.8h-2.8zM937.9 281.0h2.8v2.8h-2.8zM967.5 281.0h2.8v2.8h-2.8zM997.1 281.0h2.8v2.8h-2.8zM1026.7 281.0h2.8v2.8h-2.8zM1056.3 281.0h2.8v2.8h-2.8zM1085.9 281.0h2.8v2.8h-2.8zM1115.5 281.0h2.8v2.8h-2.8zM1145.1 281.0h2.8v2.8h-2.8zM1174.7 281.0h2.8v2.8h-2.8zM1204.3 281.0h2.8v2.8h-2.8zM711.4 281.0h2.8v2.8h-2.8zM681.6 281.0h2.8v2.8h-2.8zM651.8 281.0h2.8v2.8h-2.8zM622.0 281.0h2.8v2.8h-2.8zM592.2 281.0h2.8v2.8h-2.8zM562.4 281.0h2.8v2.8h-2.8zM532.6 281.0h2.8v2.8h-2.8zM502.8 281.0h2.8v2.8h-2.8zM482.4 281.0h2.8v2.8h-2.8zM438.5 282.8h2.8v2.8h-2.8zM394.9 288.7h2.8v2.8h-2.8zM352.1 298.9h2.8v2.8h-2.8zM310.5 313.2h2.8v2.8h-2.8zM270.4 331.4h2.8v2.8h-2.8z"/><rect x="729.1" y="279.4" width="6" height="6" fill="#7f7f7f"/><path d="M1227.0 289.4 L481.3 289.4 L479.3 289.4 L477.3 289.4 L475.3 289.4 L473.3 289.5 L471.3 289.5 L469.3 289.6 L467.3 289.6 L465.3 289.7 L463.3 289.8 L461.3 289.8 L459.3 289.9 L457.3 290.0 L455.3 290.2 L453.3 290.3 L451.3 290.4 L449.3 290.5 L447.3 290.7 L445.3 290.8 L443.3 291.0 L441.4 291.2 L439.4 291.4 L437.4 291.6 L435.4 291.8 L433.4 292.0 L431.4 292.2 L429.4 292.4 L427.4 292.6 L425.4 292.9 L423.5 293.1 L421.5 293.4 L419.5 293.7 L417.5 294.0 L415.5 294.2 L413.6 294.5 L411.6 294.8 L409.6 295.2 L407.6 295.5 L405.7 295.8 L403.7 296.2 L401.7 296.5 L399.8 296.9 L397.8 297.2 L395.8 297.6 L393.9 298.0 L391.9 298.4 L389.9 298.8 L388.0 299.2 L386.0 299.6 L384.1 300.0 L382.1 300.5 L380.2 300.9 L378.2 301.4 L376.3 301.8 L374.3 302.3 L372.4 302.8 L370.5 303.3 L368.5 303.8 L366.6 304.3 L364.7 304.8 L362.7 305.3 L360.8 305.9 L358.9 306.4 L356.9 307.0 L355.0 307.5 L353.1 308.1 L351.2 308.7 L349.3 309.2 L347.4 309.8 L345.5 310.4 L343.6 311.0 L341.7 311.7 L339.8 312.3 L337.9 312.9 L336.0 313.6 L334.1 314.2 L332.2 314.9 L330.3 315.5 L328.4 316.2 L326.5 316.9 L324.7 317.6 L322.8 318.3 L320.9 319.0 L319.1 319.7 L317.2 320.5 L315.3 321.2 L313.5 321.9 L311.6 322.7 L309.8 323.4 L307.9 324.2 L306.1 325.0 L304.2 325.8 L302.4 326.6 L300.6 327.4 L298.7 328.2 L296.9 329.0 L295.1 329.8 L293.3 330.6 L291.5 331.5 L289.6 332.3 L287.8 333.2 L286.0 334.1 L284.2 334.9 L282.4 335.8 L280.7 336.7 L278.9 337.6 L277.1 338.5 L275.3 339.4 L273.5 340.3 L271.8 341.3 L270.0 342.2 L268.2 343.2 L266.5 344.1 L264.7 345.1 L263.0 346.0 L261.2 347.0 L259.5 348.0 L257.7 349.0 L256.0 350.0 L254.3 351.0 L252.6 352.0 L250.8 353.0 L249.1 354.1 L247.4 355.1 L245.7 356.1 L244.0 357.2 L242.3 358.3 L240.6 359.3 L238.9 360.4 L237.3 361.5 L235.6 362.6 L233.9 363.7 L232.2 364.8 L230.6 365.9 L229.9 366.3" fill="none" stroke="#f0a06a" stroke-width="1.2"/><path d="M1227.0 289.4 L481.3 289.4 L479.3 289.4 L477.3 289.4 L475.3 289.4 L473.3 289.5 L471.3 289.5 L469.3 289.6 L467.3 289.6 L465.3 289.7 L463.3 289.8 L461.3 289.8 L459.3 289.9 L457.3 290.0 L455.3 290.2 L453.3 290.3 L451.3 290.4 L449.3 290.5 L447.3 290.7 L445.3 290.8 L443.3 291.0 L441.4 291.2 L439.4 291.4 L437.4 291.6 L435.4 291.8 L433.4 292.0 L431.4 292.2 L429.4 292.4 L427.4 292.6 L425.4 292.9 L423.5 293.1 L421.5 293.4 L419.5 293.7 L417.5 294.0 L415.5 294.2 L413.6 294.5 L411.6 294.8 L409.6 295.2 L407.6 295.5 L405.7 295.8 L403.7 296.2 L401.7 296.5 L399.8 296.9 L397.8 297.2 L395.8 297.6 L393.9 298.0 L391.9 298.4 L389.9 298.8 L388.0 299.2 L386.0 299.6 L384.1 300.0 L382.1 300.5 L380.2 300.9 L378.2 301.4 L376.3 301.8 L374.3 302.3 L372.4 302.8 L370.5 303.3 L368.5 303.8 L366.6 304.3 L364.7 304.8 L362.7 305.3 L360.8 305.9 L358.9 306.4 L356.9 307.0 L355.0 307.5 L353.1 308.1 L351.2 308.7 L349.3 309.2 L347.4 309.8 L345.5 310.4 L343.6 311.0 L341.7 311.7 L339.8 312.3 L337.9 312.9 L336.0 313.6 L334.1 314.2 L332.2 314.9 L330.3 315.5 L328.4 316.2 L326.5 316.9 L324.7 317.6 L322.8 318.3 L320.9 319.0 L319.1 319.7 L317.2 320.5 L315.3 321.2 L313.5 321.9 L311.6 322.7 L309.8 323.4 L307.9 324.2 L306.1 325.0 L304.2 325.8 L302.4 326.6 L300.6 327.4 L298.7 328.2 L296.9 329.0 L295.1 329.8 L293.3 330.6 L291.5 331.5 L289.6 332.3 L287.8 333.2 L286.0 334.1 L284.2 334.9 L282.4 335.8 L280.7 336.7 L278.9 337.6 L277.1 338.5 L275.3 339.4 L273.5 340.3 L271.8 341.3 L270.0 342.2 L268.2 343.2 L266.5 344.1 L264.7 345.1 L263.0 346.0 L261.2 347.0 L259.5 348.0 L257.7 349.0 L256.0 350.0 L254.3 351.0 L252.6 352.0 L250.8 353.0 L249.1 354.1 L247.4 355.1 L245.7 356.1 L244.0 357.2 L242.3 358.3 L240.6 359.3 L238.9 360.4 L237.3 361.5 L235.6 362.6 L233.9 363.7 L232.2 364.8 L230.6 365.9 L229.9 366.3" fill="none" stroke="#6a7a88" stroke-width="1" stroke-dasharray="1 1.5" opacity="0.6"/><path fill="#6c747c" d="M760.3 288.0h2.8v2.8h-2.8zM789.9 288.0h2.8v2.8h-2.8zM819.5 288.0h2.8v2.8h-2.8zM849.1 288.0h2.8v2.8h-2.8zM878.7 288.0h2.8v2.8h-2.8zM908.3 288.0h2.8v2.8h-2.8zM937.9 288.0h2.8v2.8h-2.8zM967.5 288.0h2.8v2.8h-2.8zM997.1 288.0h2.8v2.8h-2.8zM1026.7 288.0h2.8v2.8h-2.8zM1056.3 288.0h2.8v2.8h-2.8zM1085.9 288.0h2.8v2.8h-2.8zM1115.5 288.0h2.8v2.8h-2.8zM1145.1 288.0h2.8v2.8h-2.8zM1174.7 288.0h2.8v2.8h-2.8zM1204.3 288.0h2.8v2.8h-2.8zM711.4 288.0h2.8v2.8h-2.8zM681.6 288.0h2.8v2.8h-2.8zM651.8 288.0h2.8v2.8h-2.8zM622.0 288.0h2.8v2.8h-2.8zM592.2 288.0h2.8v2.8h-2.8zM562.4 288.0h2.8v2.8h-2.8zM532.6 288.0h2.8v2.8h-2.8zM502.8 288.0h2.8v2.8h-2.8zM482.9 288.0h2.8v2.8h-2.8zM439.0 289.9h2.8v2.8h-2.8zM395.4 296.0h2.8v2.8h-2.8zM352.7 306.4h2.8v2.8h-2.8zM311.1 320.9h2.8v2.8h-2.8zM271.2 339.4h2.8v2.8h-2.8z"/><rect x="729.1" y="286.4" width="6" height="6" fill="#7f7f7f"/><path d="M1227.0 322.9 L481.2 322.9 L479.2 322.9 L477.2 322.9 L475.2 322.9 L473.2 323.0 L471.2 323.0 L469.2 323.1 L467.2 323.1 L465.2 323.2 L463.2 323.3 L461.2 323.4 L459.2 323.5 L457.2 323.6 L455.2 323.7 L453.2 323.9 L451.2 324.0 L449.2 324.2 L447.2 324.3 L445.2 324.5 L443.3 324.7 L441.3 324.9 L439.3 325.1 L437.3 325.3 L435.3 325.5 L433.3 325.7 L431.3 326.0 L429.3 326.2 L427.4 326.5 L425.4 326.7 L423.4 327.0 L421.4 327.3 L419.4 327.6 L417.5 327.9 L415.5 328.2 L413.5 328.6 L411.5 328.9 L409.6 329.2 L407.6 329.6 L405.6 330.0 L403.7 330.3 L401.7 330.7 L399.8 331.1 L397.8 331.5 L395.8 331.9 L393.9 332.4 L391.9 332.8 L390.0 333.2 L388.0 333.7 L386.1 334.1 L384.1 334.6 L382.2 335.1 L380.3 335.6 L378.3 336.1 L376.4 336.6 L374.5 337.1 L372.5 337.6 L370.6 338.2 L368.7 338.7 L366.8 339.3 L364.8 339.8 L362.9 340.4 L361.0 341.0 L359.1 341.6 L357.2 342.2 L355.3 342.8 L353.4 343.4 L351.5 344.1 L349.6 344.7 L347.7 345.4 L345.8 346.0 L343.9 346.7 L342.0 347.4 L340.2 348.0 L338.3 348.7 L336.4 349.5 L334.6 350.2 L332.7 350.9 L330.8 351.6 L329.0 352.4 L327.1 353.1 L325.3 353.9 L323.4 354.6 L321.6 355.4 L319.7 356.2 L317.9 357.0 L316.1 357.8 L314.2 358.6 L312.4 359.4 L310.6 360.3 L308.8 361.1 L307.0 362.0 L305.2 362.8 L303.4 363.7 L301.6 364.6 L299.8 365.5 L298.0 366.3 L296.2 367.2 L294.4 368.2 L292.7 369.1 L290.9 370.0 L289.1 370.9 L287.4 371.9 L285.6 372.8 L283.8 373.8 L282.1 374.8 L280.4 375.8 L278.6 376.8 L276.9 377.7 L275.1 378.8 L273.4 379.8 L271.7 380.8 L270.0 381.8 L268.3 382.9 L266.6 383.9 L264.9 385.0 L263.2 386.0 L261.5 387.1 L259.8 388.2 L258.1 389.3 L256.5 390.4 L254.8 391.5 L253.1 392.6 L251.5 393.7 L249.8 394.8 L248.2 396.0 L246.6 397.1 L244.9 398.3 L243.3 399.4 L241.7 400.6 L240.1 401.8 L238.4 403.0 L236.8 404.2 L235.2 405.4 L233.6 406.6 L232.1 407.8 L230.5 409.0 L229.9 409.4" fill="none" stroke="#000" stroke-width="1" stroke-dasharray="1 1.2" opacity="0.7"/><path fill="#000" d="M730.9 321.6h2.5v2.5h-2.5zM738.3 321.6h2.5v2.5h-2.5zM745.7 321.6h2.5v2.5h-2.5zM753.1 321.6h2.5v2.5h-2.5zM760.5 321.6h2.5v2.5h-2.5zM767.9 321.6h2.5v2.5h-2.5zM775.4 321.6h2.5v2.5h-2.5zM782.8 321.6h2.5v2.5h-2.5zM790.2 321.6h2.5v2.5h-2.5zM797.6 321.6h2.5v2.5h-2.5zM805.0 321.6h2.5v2.5h-2.5zM812.5 321.6h2.5v2.5h-2.5zM819.9 321.6h2.5v2.5h-2.5zM827.3 321.6h2.5v2.5h-2.5zM834.7 321.6h2.5v2.5h-2.5zM842.1 321.6h2.5v2.5h-2.5zM849.6 321.6h2.5v2.5h-2.5zM857.0 321.6h2.5v2.5h-2.5zM864.4 321.6h2.5v2.5h-2.5zM871.8 321.6h2.5v2.5h-2.5zM879.2 321.6h2.5v2.5h-2.5zM886.7 321.6h2.5v2.5h-2.5zM894.1 321.6h2.5v2.5h-2.5zM901.5 321.6h2.5v2.5h-2.5zM908.9 321.6h2.5v2.5h-2.5zM916.3 321.6h2.5v2.5h-2.5zM923.8 321.6h2.5v2.5h-2.5zM931.2 321.6h2.5v2.5h-2.5zM938.6 321.6h2.5v2.5h-2.5zM946.0 321.6h2.5v2.5h-2.5zM953.4 321.6h2.5v2.5h-2.5zM960.9 321.6h2.5v2.5h-2.5zM968.3 321.6h2.5v2.5h-2.5zM975.7 321.6h2.5v2.5h-2.5zM983.1 321.6h2.5v2.5h-2.5zM990.5 321.6h2.5v2.5h-2.5zM998.0 321.6h2.5v2.5h-2.5zM1005.4 321.6h2.5v2.5h-2.5zM1012.8 321.6h2.5v2.5h-2.5zM1020.2 321.6h2.5v2.5h-2.5zM1027.6 321.6h2.5v2.5h-2.5zM1035.1 321.6h2.5v2.5h-2.5zM1042.5 321.6h2.5v2.5h-2.5zM1049.9 321.6h2.5v2.5h-2.5zM1057.3 321.6h2.5v2.5h-2.5zM1064.7 321.6h2.5v2.5h-2.5zM1072.2 321.6h2.5v2.5h-2.5zM1079.6 321.6h2.5v2.5h-2.5zM1087.0 321.6h2.5v2.5h-2.5zM1094.4 321.6h2.5v2.5h-2.5zM1101.8 321.6h2.5v2.5h-2.5zM1109.3 321.6h2.5v2.5h-2.5zM1116.7 321.6h2.5v2.5h-2.5zM1124.1 321.6h2.5v2.5h-2.5zM1131.5 321.6h2.5v2.5h-2.5zM1138.9 321.6h2.5v2.5h-2.5zM1146.4 321.6h2.5v2.5h-2.5zM1153.8 321.6h2.5v2.5h-2.5zM1161.2 321.6h2.5v2.5h-2.5zM1168.6 321.6h2.5v2.5h-2.5zM1176.0 321.6h2.5v2.5h-2.5zM1183.5 321.6h2.5v2.5h-2.5zM1190.9 321.6h2.5v2.5h-2.5zM1198.3 321.6h2.5v2.5h-2.5zM1205.7 321.6h2.5v2.5h-2.5zM1213.1 321.6h2.5v2.5h-2.5zM1220.6 321.6h2.5v2.5h-2.5zM723.5 321.6h2.5v2.5h-2.5zM716.1 321.6h2.5v2.5h-2.5zM708.7 321.6h2.5v2.5h-2.5zM701.3 321.6h2.5v2.5h-2.5zM693.9 321.6h2.5v2.5h-2.5zM686.5 321.6h2.5v2.5h-2.5zM679.1 321.6h2.5v2.5h-2.5zM671.7 321.6h2.5v2.5h-2.5zM664.3 321.6h2.5v2.5h-2.5zM656.9 321.6h2.5v2.5h-2.5zM649.5 321.6h2.5v2.5h-2.5zM642.1 321.6h2.5v2.5h-2.5zM634.7 321.6h2.5v2.5h-2.5zM627.3 321.6h2.5v2.5h-2.5zM619.9 321.6h2.5v2.5h-2.5zM612.5 321.6h2.5v2.5h-2.5zM605.1 321.6h2.5v2.5h-2.5zM597.7 321.6h2.5v2.5h-2.5zM590.3 321.6h2.5v2.5h-2.5zM582.9 321.6h2.5v2.5h-2.5zM575.5 321.6h2.5v2.5h-2.5zM568.1 321.6h2.5v2.5h-2.5zM560.7 321.6h2.5v2.5h-2.5zM553.3 321.6h2.5v2.5h-2.5zM545.9 321.6h2.5v2.5h-2.5zM538.5 321.6h2.5v2.5h-2.5zM531.1 321.6h2.5v2.5h-2.5zM523.7 321.6h2.5v2.5h-2.5zM516.3 321.6h2.5v2.5h-2.5zM508.9 321.6h2.5v2.5h-2.5zM501.5 321.6h2.5v2.5h-2.5zM494.1 321.6h2.5v2.5h-2.5zM486.7 321.6h2.5v2.5h-2.5zM479.3 321.7h2.5v2.5h-2.5zM471.9 321.7h2.5v2.5h-2.5zM464.6 321.9h2.5v2.5h-2.5zM457.2 322.3h2.5v2.5h-2.5zM449.9 322.8h2.5v2.5h-2.5zM442.6 323.4h2.5v2.5h-2.5zM435.2 324.1h2.5v2.5h-2.5zM427.9 325.0h2.5v2.5h-2.5zM420.7 326.0h2.5v2.5h-2.5zM413.4 327.1h2.5v2.5h-2.5zM406.2 328.4h2.5v2.5h-2.5zM398.9 329.8h2.5v2.5h-2.5zM391.8 331.3h2.5v2.5h-2.5zM384.6 333.0h2.5v2.5h-2.5zM377.5 334.7h2.5v2.5h-2.5zM370.4 336.6h2.5v2.5h-2.5zM363.3 338.7h2.5v2.5h-2.5zM356.3 340.8h2.5v2.5h-2.5zM349.3 343.1h2.5v2.5h-2.5zM342.4 345.6h2.5v2.5h-2.5zM335.5 348.1h2.5v2.5h-2.5zM328.6 350.8h2.5v2.5h-2.5zM321.8 353.5h2.5v2.5h-2.5zM315.1 356.5h2.5v2.5h-2.5zM308.4 359.5h2.5v2.5h-2.5zM301.7 362.6h2.5v2.5h-2.5zM295.1 365.9h2.5v2.5h-2.5zM288.6 369.3h2.5v2.5h-2.5zM282.2 372.8h2.5v2.5h-2.5zM275.8 376.4h2.5v2.5h-2.5zM269.4 380.2h2.5v2.5h-2.5zM263.2 384.0h2.5v2.5h-2.5zM257.0 388.0h2.5v2.5h-2.5zM250.9 392.0h2.5v2.5h-2.5zM244.8 396.2h2.5v2.5h-2.5zM238.8 400.5h2.5v2.5h-2.5z"/><rect x="729.1" y="319.9" width="6" height="6" fill="#000"/><path d="M1227.0 356.3 L476.6 356.3 L474.6 356.3 L472.6 356.3 L470.6 356.3 L468.6 356.4 L466.6 356.4 L464.6 356.5 L462.6 356.6 L460.6 356.7 L458.6 356.7 L456.6 356.9 L454.6 357.0 L452.6 357.1 L450.6 357.2 L448.6 357.4 L446.6 357.5 L444.6 357.7 L442.6 357.9 L440.7 358.1 L438.7 358.3 L436.7 358.5 L434.7 358.7 L432.7 359.0 L430.7 359.2 L428.7 359.5 L426.8 359.7 L424.8 360.0 L422.8 360.3 L420.8 360.6 L418.8 360.9 L416.9 361.2 L414.9 361.6 L412.9 361.9 L411.0 362.3 L409.0 362.6 L407.0 363.0 L405.1 363.4 L403.1 363.8 L401.2 364.2 L399.2 364.6 L397.2 365.1 L395.3 365.5 L393.3 366.0 L391.4 366.4 L389.5 366.9 L387.5 367.4 L385.6 367.9 L383.6 368.4 L381.7 368.9 L379.8 369.4 L377.9 370.0 L375.9 370.5 L374.0 371.1 L372.1 371.7 L370.2 372.2 L368.3 372.8 L366.4 373.4 L364.5 374.0 L362.6 374.7 L360.7 375.3 L358.8 375.9 L356.9 376.6 L355.0 377.3 L353.1 377.9 L351.2 378.6 L349.4 379.3 L347.5 380.0 L345.6 380.7 L343.8 381.5 L341.9 382.2 L340.0 382.9 L338.2 383.7 L336.3 384.5 L334.5 385.2 L332.7 386.0 L330.8 386.8 L329.0 387.6 L327.2 388.5 L325.3 389.3 L323.5 390.1 L321.7 391.0 L319.9 391.8 L318.1 392.7 L316.3 393.6 L314.5 394.5 L312.7 395.4 L311.0 396.3 L309.2 397.2 L307.4 398.1 L305.6 399.0 L303.9 400.0 L302.1 400.9 L300.4 401.9 L298.6 402.9 L296.9 403.9 L295.1 404.9 L293.4 405.9 L291.7 406.9 L290.0 407.9 L288.3 408.9 L286.6 410.0 L284.8 411.0 L283.2 412.1 L281.5 413.2 L279.8 414.2 L278.1 415.3 L276.4 416.4 L274.8 417.5 L273.1 418.6 L271.4 419.8 L269.8 420.9 L268.2 422.0 L266.5 423.2 L264.9 424.4 L263.3 425.5 L261.7 426.7 L260.0 427.9 L258.4 429.1 L256.9 430.3 L255.3 431.5 L253.7 432.7 L252.1 434.0 L250.5 435.2 L249.0 436.5 L247.4 437.7 L245.9 439.0 L244.3 440.3 L242.8 441.5 L241.3 442.8 L239.7 444.1 L238.2 445.4 L236.7 446.7 L235.2 448.1 L233.7 449.4 L232.3 450.7 L230.8 452.1 L229.9 452.9" fill="none" stroke="#6a7a88" stroke-width="1" stroke-dasharray="1 1.5" opacity="0.7"/><path d="M1227.0 356.3 L476.6 356.3 L474.6 356.3 L472.6 356.3 L470.6 356.3 L468.6 356.4 L466.6 356.4 L464.6 356.5 L462.6 356.6 L460.6 356.7 L458.6 356.7 L456.6 356.9 L454.6 357.0 L452.6 357.1 L450.6 357.2 L448.6 357.4 L446.6 357.5 L444.6 357.7 L442.6 357.9 L440.7 358.1 L438.7 358.3 L436.7 358.5 L434.7 358.7 L432.7 359.0 L430.7 359.2 L428.7 359.5 L426.8 359.7 L424.8 360.0 L422.8 360.3 L420.8 360.6 L418.8 360.9 L416.9 361.2 L414.9 361.6 L412.9 361.9 L411.0 362.3 L409.0 362.6 L407.0 363.0 L405.1 363.4 L403.1 363.8 L401.2 364.2 L399.2 364.6 L397.2 365.1 L395.3 365.5 L393.3 366.0 L391.4 366.4 L389.5 366.9 L387.5 367.4 L385.6 367.9 L383.6 368.4 L381.7 368.9 L379.8 369.4 L377.9 370.0 L375.9 370.5 L374.0 371.1 L372.1 371.7 L370.2 372.2 L368.3 372.8 L366.4 373.4 L364.5 374.0 L362.6 374.7 L360.7 375.3 L358.8 375.9 L356.9 376.6 L355.0 377.3 L353.1 377.9 L351.2 378.6 L349.4 379.3 L347.5 380.0 L345.6 380.7 L343.8 381.5 L341.9 382.2 L340.0 382.9 L338.2 383.7 L336.3 384.5 L334.5 385.2 L332.7 386.0 L330.8 386.8 L329.0 387.6 L327.2 388.5 L325.3 389.3 L323.5 390.1 L321.7 391.0 L319.9 391.8 L318.1 392.7 L316.3 393.6 L314.5 394.5 L312.7 395.4 L311.0 396.3 L309.2 397.2 L307.4 398.1 L305.6 399.0 L303.9 400.0 L302.1 400.9 L300.4 401.9 L298.6 402.9 L296.9 403.9 L295.1 404.9 L293.4 405.9 L291.7 406.9 L290.0 407.9 L288.3 408.9 L286.6 410.0 L284.8 411.0 L283.2 412.1 L281.5 413.2 L279.8 414.2 L278.1 415.3 L276.4 416.4 L274.8 417.5 L273.1 418.6 L271.4 419.8 L269.8 420.9 L268.2 422.0 L266.5 423.2 L264.9 424.4 L263.3 425.5 L261.7 426.7 L260.0 427.9 L258.4 429.1 L256.9 430.3 L255.3 431.5 L253.7 432.7 L252.1 434.0 L250.5 435.2 L249.0 436.5 L247.4 437.7 L245.9 439.0 L244.3 440.3 L242.8 441.5 L241.3 442.8 L239.7 444.1 L238.2 445.4 L236.7 446.7 L235.2 448.1 L233.7 449.4 L232.3 450.7 L230.8 452.1 L229.9 452.9" fill="none" stroke="#f0a06a" stroke-width="1.1" stroke-dasharray="45 45" opacity="0.9"/><path fill="#6c747c" d="M760.3 354.9h2.8v2.8h-2.8zM789.9 354.9h2.8v2.8h-2.8zM819.5 354.9h2.8v2.8h-2.8zM849.1 354.9h2.8v2.8h-2.8zM878.7 354.9h2.8v2.8h-2.8zM908.3 354.9h2.8v2.8h-2.8zM937.9 354.9h2.8v2.8h-2.8zM967.5 354.9h2.8v2.8h-2.8zM997.1 354.9h2.8v2.8h-2.8zM1026.7 354.9h2.8v2.8h-2.8zM1056.3 354.9h2.8v2.8h-2.8zM1085.9 354.9h2.8v2.8h-2.8zM1115.5 354.9h2.8v2.8h-2.8zM1145.1 354.9h2.8v2.8h-2.8zM1174.7 354.9h2.8v2.8h-2.8zM1204.3 354.9h2.8v2.8h-2.8zM711.4 354.9h2.8v2.8h-2.8zM681.6 354.9h2.8v2.8h-2.8zM651.8 354.9h2.8v2.8h-2.8zM622.0 354.9h2.8v2.8h-2.8zM592.2 354.9h2.8v2.8h-2.8zM562.4 354.9h2.8v2.8h-2.8zM532.6 354.9h2.8v2.8h-2.8zM502.8 354.9h2.8v2.8h-2.8zM473.2 354.9h2.8v2.8h-2.8zM437.3 356.9h2.8v2.8h-2.8zM401.7 362.4h2.8v2.8h-2.8zM366.9 371.4h2.8v2.8h-2.8zM333.1 383.8h2.8v2.8h-2.8zM300.7 399.5h2.8v2.8h-2.8zM270.0 418.4h2.8v2.8h-2.8zM241.4 440.1h2.8v2.8h-2.8z"/><rect x="729.1" y="353.3" width="6" height="6" fill="#7f7f7f"/><path d="M1227.0 389.3 L482.0 389.3 L480.0 389.3 L478.0 389.3 L476.0 389.4 L474.0 389.4 L472.0 389.4 L470.0 389.5 L468.0 389.6 L466.0 389.7 L464.0 389.8 L462.0 389.9 L460.0 390.0 L458.0 390.1 L456.0 390.3 L454.0 390.4 L452.0 390.6 L450.0 390.8 L448.1 391.0 L446.1 391.2 L444.1 391.4 L442.1 391.6 L440.1 391.9 L438.1 392.1 L436.1 392.4 L434.2 392.7 L432.2 392.9 L430.2 393.2 L428.2 393.5 L426.2 393.9 L424.3 394.2 L422.3 394.5 L420.3 394.9 L418.4 395.3 L416.4 395.6 L414.4 396.0 L412.5 396.4 L410.5 396.8 L408.6 397.3 L406.6 397.7 L404.7 398.1 L402.7 398.6 L400.8 399.1 L398.8 399.5 L396.9 400.0 L395.0 400.5 L393.0 401.0 L391.1 401.6 L389.2 402.1 L387.2 402.6 L385.3 403.2 L383.4 403.8 L381.5 404.4 L379.6 404.9 L377.7 405.5 L375.8 406.2 L373.9 406.8 L372.0 407.4 L370.1 408.1 L368.2 408.7 L366.3 409.4 L364.4 410.1 L362.6 410.8 L360.7 411.5 L358.8 412.2 L357.0 412.9 L355.1 413.6 L353.2 414.4 L351.4 415.1 L349.5 415.9 L347.7 416.7 L345.9 417.5 L344.0 418.3 L342.2 419.1 L340.4 419.9 L338.5 420.7 L336.7 421.6 L334.9 422.4 L333.1 423.3 L331.3 424.2 L329.5 425.1 L327.7 425.9 L326.0 426.9 L324.2 427.8 L322.4 428.7 L320.6 429.6 L318.9 430.6 L317.1 431.5 L315.4 432.5 L313.6 433.5 L311.9 434.5 L310.1 435.5 L308.4 436.5 L306.7 437.5 L305.0 438.5 L303.3 439.5 L301.6 440.6 L299.9 441.6 L298.2 442.7 L296.5 443.8 L294.8 444.9 L293.1 446.0 L291.5 447.1 L289.8 448.2 L288.2 449.3 L286.5 450.5 L284.9 451.6 L283.2 452.8 L281.6 453.9 L280.0 455.1 L278.4 456.3 L276.8 457.5 L275.2 458.7 L273.6 459.9 L272.0 461.1 L270.4 462.3 L268.9 463.6 L267.3 464.8 L265.7 466.1 L264.2 467.3 L262.6 468.6 L261.1 469.9 L259.6 471.2 L258.1 472.5 L256.6 473.8 L255.1 475.1 L253.6 476.4 L252.1 477.8 L250.6 479.1 L249.1 480.5 L247.6 481.8 L246.2 483.2 L244.7 484.6 L243.3 486.0 L241.9 487.4 L240.4 488.8 L239.0 490.2 L237.6 491.6 L236.2 493.0 L234.8 494.5 L233.5 495.9 L232.1 497.4 L230.7 498.8 L230.0 499.6" fill="none" stroke="#000" stroke-width="1" stroke-dasharray="1 1.2" opacity="0.7"/><path fill="#000" d="M730.9 388.1h2.5v2.5h-2.5zM738.3 388.1h2.5v2.5h-2.5zM745.7 388.1h2.5v2.5h-2.5zM753.1 388.1h2.5v2.5h-2.5zM760.5 388.1h2.5v2.5h-2.5zM767.9 388.1h2.5v2.5h-2.5zM775.4 388.1h2.5v2.5h-2.5zM782.8 388.1h2.5v2.5h-2.5zM790.2 388.1h2.5v2.5h-2.5zM797.6 388.1h2.5v2.5h-2.5zM805.0 388.1h2.5v2.5h-2.5zM812.5 388.1h2.5v2.5h-2.5zM819.9 388.1h2.5v2.5h-2.5zM827.3 388.1h2.5v2.5h-2.5zM834.7 388.1h2.5v2.5h-2.5zM842.1 388.1h2.5v2.5h-2.5zM849.6 388.1h2.5v2.5h-2.5zM857.0 388.1h2.5v2.5h-2.5zM864.4 388.1h2.5v2.5h-2.5zM871.8 388.1h2.5v2.5h-2.5zM879.2 388.1h2.5v2.5h-2.5zM886.7 388.1h2.5v2.5h-2.5zM894.1 388.1h2.5v2.5h-2.5zM901.5 388.1h2.5v2.5h-2.5zM908.9 388.1h2.5v2.5h-2.5zM916.3 388.1h2.5v2.5h-2.5zM923.8 388.1h2.5v2.5h-2.5zM931.2 388.1h2.5v2.5h-2.5zM938.6 388.1h2.5v2.5h-2.5zM946.0 388.1h2.5v2.5h-2.5zM953.4 388.1h2.5v2.5h-2.5zM960.9 388.1h2.5v2.5h-2.5zM968.3 388.1h2.5v2.5h-2.5zM975.7 388.1h2.5v2.5h-2.5zM983.1 388.1h2.5v2.5h-2.5zM990.5 388.1h2.5v2.5h-2.5zM998.0 388.1h2.5v2.5h-2.5zM1005.4 388.1h2.5v2.5h-2.5zM1012.8 388.1h2.5v2.5h-2.5zM1020.2 388.1h2.5v2.5h-2.5zM1027.6 388.1h2.5v2.5h-2.5zM1035.1 388.1h2.5v2.5h-2.5zM1042.5 388.1h2.5v2.5h-2.5zM1049.9 388.1h2.5v2.5h-2.5zM1057.3 388.1h2.5v2.5h-2.5zM1064.7 388.1h2.5v2.5h-2.5zM1072.2 388.1h2.5v2.5h-2.5zM1079.6 388.1h2.5v2.5h-2.5zM1087.0 388.1h2.5v2.5h-2.5zM1094.4 388.1h2.5v2.5h-2.5zM1101.8 388.1h2.5v2.5h-2.5zM1109.3 388.1h2.5v2.5h-2.5zM1116.7 388.1h2.5v2.5h-2.5zM1124.1 388.1h2.5v2.5h-2.5zM1131.5 388.1h2.5v2.5h-2.5zM1138.9 388.1h2.5v2.5h-2.5zM1146.4 388.1h2.5v2.5h-2.5zM1153.8 388.1h2.5v2.5h-2.5zM1161.2 388.1h2.5v2.5h-2.5zM1168.6 388.1h2.5v2.5h-2.5zM1176.0 388.1h2.5v2.5h-2.5zM1183.5 388.1h2.5v2.5h-2.5zM1190.9 388.1h2.5v2.5h-2.5zM1198.3 388.1h2.5v2.5h-2.5zM1205.7 388.1h2.5v2.5h-2.5zM1213.1 388.1h2.5v2.5h-2.5zM1220.6 388.1h2.5v2.5h-2.5zM723.5 388.1h2.5v2.5h-2.5zM716.1 388.1h2.5v2.5h-2.5zM708.7 388.1h2.5v2.5h-2.5zM701.3 388.1h2.5v2.5h-2.5zM693.9 388.1h2.5v2.5h-2.5zM686.5 388.1h2.5v2.5h-2.5zM679.1 388.1h2.5v2.5h-2.5zM671.7 388.1h2.5v2.5h-2.5zM664.3 388.1h2.5v2.5h-2.5zM656.9 388.1h2.5v2.5h-2.5zM649.5 388.1h2.5v2.5h-2.5zM642.1 388.1h2.5v2.5h-2.5zM634.7 388.1h2.5v2.5h-2.5zM627.3 388.1h2.5v2.5h-2.5zM619.9 388.1h2.5v2.5h-2.5zM612.5 388.1h2.5v2.5h-2.5zM605.1 388.1h2.5v2.5h-2.5zM597.7 388.1h2.5v2.5h-2.5zM590.3 388.1h2.5v2.5h-2.5zM582.9 388.1h2.5v2.5h-2.5zM575.5 388.1h2.5v2.5h-2.5zM568.1 388.1h2.5v2.5h-2.5zM560.7 388.1h2.5v2.5h-2.5zM553.3 388.1h2.5v2.5h-2.5zM545.9 388.1h2.5v2.5h-2.5zM538.5 388.1h2.5v2.5h-2.5zM531.1 388.1h2.5v2.5h-2.5zM523.7 388.1h2.5v2.5h-2.5zM516.3 388.1h2.5v2.5h-2.5zM508.9 388.1h2.5v2.5h-2.5zM501.5 388.1h2.5v2.5h-2.5zM494.1 388.1h2.5v2.5h-2.5zM486.7 388.1h2.5v2.5h-2.5zM479.3 388.1h2.5v2.5h-2.5zM471.9 388.2h2.5v2.5h-2.5zM464.6 388.4h2.5v2.5h-2.5zM457.2 388.9h2.5v2.5h-2.5zM449.9 389.4h2.5v2.5h-2.5zM442.6 390.2h2.5v2.5h-2.5zM435.3 391.1h2.5v2.5h-2.5zM428.0 392.1h2.5v2.5h-2.5zM420.8 393.3h2.5v2.5h-2.5zM413.5 394.7h2.5v2.5h-2.5zM406.3 396.2h2.5v2.5h-2.5zM399.2 397.9h2.5v2.5h-2.5zM392.1 399.7h2.5v2.5h-2.5zM385.0 401.7h2.5v2.5h-2.5zM378.0 403.8h2.5v2.5h-2.5zM371.0 406.1h2.5v2.5h-2.5zM364.0 408.5h2.5v2.5h-2.5zM357.1 411.1h2.5v2.5h-2.5zM350.3 413.8h2.5v2.5h-2.5zM343.6 416.7h2.5v2.5h-2.5zM336.8 419.7h2.5v2.5h-2.5zM330.2 422.9h2.5v2.5h-2.5zM323.6 426.1h2.5v2.5h-2.5zM317.1 429.6h2.5v2.5h-2.5zM310.7 433.2h2.5v2.5h-2.5zM304.4 436.9h2.5v2.5h-2.5zM298.1 440.7h2.5v2.5h-2.5zM291.9 444.7h2.5v2.5h-2.5zM285.8 448.8h2.5v2.5h-2.5zM279.8 453.1h2.5v2.5h-2.5zM273.9 457.4h2.5v2.5h-2.5zM268.1 461.9h2.5v2.5h-2.5zM262.4 466.5h2.5v2.5h-2.5zM256.8 471.3h2.5v2.5h-2.5zM251.3 476.1h2.5v2.5h-2.5zM245.9 481.1h2.5v2.5h-2.5zM240.6 486.2h2.5v2.5h-2.5z"/><rect x="729.1" y="386.3" width="6" height="6" fill="#000"/><path d="M1227.0 423.4 L477.0 423.4 L475.0 423.4 L473.0 423.4 L471.0 423.5 L469.0 423.5 L467.0 423.6 L465.0 423.6 L463.0 423.7 L461.0 423.8 L459.0 423.9 L457.0 424.1 L455.0 424.2 L453.0 424.4 L451.0 424.5 L449.0 424.7 L447.0 424.9 L445.1 425.1 L443.1 425.3 L441.1 425.5 L439.1 425.8 L437.1 426.0 L435.1 426.3 L433.2 426.6 L431.2 426.9 L429.2 427.2 L427.2 427.5 L425.3 427.9 L423.3 428.2 L421.3 428.6 L419.4 429.0 L417.4 429.3 L415.4 429.7 L413.5 430.2 L411.5 430.6 L409.6 431.0 L407.6 431.5 L405.7 431.9 L403.7 432.4 L401.8 432.9 L399.9 433.4 L397.9 433.9 L396.0 434.5 L394.1 435.0 L392.2 435.6 L390.2 436.1 L388.3 436.7 L386.4 437.3 L384.5 437.9 L382.6 438.5 L380.7 439.2 L378.8 439.8 L376.9 440.5 L375.0 441.1 L373.2 441.8 L371.3 442.5 L369.4 443.2 L367.6 443.9 L365.7 444.7 L363.8 445.4 L362.0 446.2 L360.1 446.9 L358.3 447.7 L356.5 448.5 L354.6 449.3 L352.8 450.1 L351.0 451.0 L349.2 451.8 L347.4 452.7 L345.6 453.5 L343.8 454.4 L342.0 455.3 L340.2 456.2 L338.4 457.1 L336.6 458.0 L334.9 459.0 L333.1 459.9 L331.3 460.9 L329.6 461.8 L327.9 462.8 L326.1 463.8 L324.4 464.8 L322.7 465.8 L320.9 466.9 L319.2 467.9 L317.5 469.0 L315.8 470.0 L314.2 471.1 L312.5 472.2 L310.8 473.3 L309.1 474.4 L307.5 475.5 L305.8 476.6 L304.2 477.8 L302.5 478.9 L300.9 480.1 L299.3 481.2 L297.7 482.4 L296.1 483.6 L294.5 484.8 L292.9 486.0 L291.3 487.3 L289.7 488.5 L288.2 489.7 L286.6 491.0 L285.1 492.3 L283.5 493.5 L282.0 494.8 L280.5 496.1 L279.0 497.4 L277.5 498.7 L276.0 500.1 L274.5 501.4 L273.0 502.8 L271.5 504.1 L270.1 505.5 L268.6 506.9 L267.2 508.2 L265.7 509.6 L264.3 511.0 L262.9 512.5 L261.5 513.9 L260.1 515.3 L258.7 516.8 L257.3 518.2 L256.0 519.7 L254.6 521.1 L253.3 522.6 L251.9 524.1 L250.6 525.6 L249.3 527.1 L248.0 528.6 L246.7 530.1 L245.4 531.7 L244.1 533.2 L242.8 534.7 L241.6 536.3 L240.3 537.9 L239.1 539.4 L237.9 541.0 L236.7 542.6 L235.5 544.2 L234.3 545.8 L233.1 547.4 L231.9 549.0 L230.7 550.7 L230.0 551.8" fill="none" stroke="#fbb98b" stroke-width="4.4"/><path d="M1227.0 423.4 L477.0 423.4 L475.0 423.4 L473.0 423.4 L471.0 423.5 L469.0 423.5 L467.0 423.6 L465.0 423.6 L463.0 423.7 L461.0 423.8 L459.0 423.9 L457.0 424.1 L455.0 424.2 L453.0 424.4 L451.0 424.5 L449.0 424.7 L447.0 424.9 L445.1 425.1 L443.1 425.3 L441.1 425.5 L439.1 425.8 L437.1 426.0 L435.1 426.3 L433.2 426.6 L431.2 426.9 L429.2 427.2 L427.2 427.5 L425.3 427.9 L423.3 428.2 L421.3 428.6 L419.4 429.0 L417.4 429.3 L415.4 429.7 L413.5 430.2 L411.5 430.6 L409.6 431.0 L407.6 431.5 L405.7 431.9 L403.7 432.4 L401.8 432.9 L399.9 433.4 L397.9 433.9 L396.0 434.5 L394.1 435.0 L392.2 435.6 L390.2 436.1 L388.3 436.7 L386.4 437.3 L384.5 437.9 L382.6 438.5 L380.7 439.2 L378.8 439.8 L376.9 440.5 L375.0 441.1 L373.2 441.8 L371.3 442.5 L369.4 443.2 L367.6 443.9 L365.7 444.7 L363.8 445.4 L362.0 446.2 L360.1 446.9 L358.3 447.7 L356.5 448.5 L354.6 449.3 L352.8 450.1 L351.0 451.0 L349.2 451.8 L347.4 452.7 L345.6 453.5 L343.8 454.4 L342.0 455.3 L340.2 456.2 L338.4 457.1 L336.6 458.0 L334.9 459.0 L333.1 459.9 L331.3 460.9 L329.6 461.8 L327.9 462.8 L326.1 463.8 L324.4 464.8 L322.7 465.8 L320.9 466.9 L319.2 467.9 L317.5 469.0 L315.8 470.0 L314.2 471.1 L312.5 472.2 L310.8 473.3 L309.1 474.4 L307.5 475.5 L305.8 476.6 L304.2 477.8 L302.5 478.9 L300.9 480.1 L299.3 481.2 L297.7 482.4 L296.1 483.6 L294.5 484.8 L292.9 486.0 L291.3 487.3 L289.7 488.5 L288.2 489.7 L286.6 491.0 L285.1 492.3 L283.5 493.5 L282.0 494.8 L280.5 496.1 L279.0 497.4 L277.5 498.7 L276.0 500.1 L274.5 501.4 L273.0 502.8 L271.5 504.1 L270.1 505.5 L268.6 506.9 L267.2 508.2 L265.7 509.6 L264.3 511.0 L262.9 512.5 L261.5 513.9 L260.1 515.3 L258.7 516.8 L257.3 518.2 L256.0 519.7 L254.6 521.1 L253.3 522.6 L251.9 524.1 L250.6 525.6 L249.3 527.1 L248.0 528.6 L246.7 530.1 L245.4 531.7 L244.1 533.2 L242.8 534.7 L241.6 536.3 L240.3 537.9 L239.1 539.4 L237.9 541.0 L236.7 542.6 L235.5 544.2 L234.3 545.8 L233.1 547.4 L231.9 549.0 L230.7 550.7 L230.0 551.8" fill="none" stroke="#fcd0ad" stroke-width="1.6"/><path d="M1227.0 423.4 L477.0 423.4 L475.0 423.4 L473.0 423.4 L471.0 423.5 L469.0 423.5 L467.0 423.6 L465.0 423.6 L463.0 423.7 L461.0 423.8 L459.0 423.9 L457.0 424.1 L455.0 424.2 L453.0 424.4 L451.0 424.5 L449.0 424.7 L447.0 424.9 L445.1 425.1 L443.1 425.3 L441.1 425.5 L439.1 425.8 L437.1 426.0 L435.1 426.3 L433.2 426.6 L431.2 426.9 L429.2 427.2 L427.2 427.5 L425.3 427.9 L423.3 428.2 L421.3 428.6 L419.4 429.0 L417.4 429.3 L415.4 429.7 L413.5 430.2 L411.5 430.6 L409.6 431.0 L407.6 431.5 L405.7 431.9 L403.7 432.4 L401.8 432.9 L399.9 433.4 L397.9 433.9 L396.0 434.5 L394.1 435.0 L392.2 435.6 L390.2 436.1 L388.3 436.7 L386.4 437.3 L384.5 437.9 L382.6 438.5 L380.7 439.2 L378.8 439.8 L376.9 440.5 L375.0 441.1 L373.2 441.8 L371.3 442.5 L369.4 443.2 L367.6 443.9 L365.7 444.7 L363.8 445.4 L362.0 446.2 L360.1 446.9 L358.3 447.7 L356.5 448.5 L354.6 449.3 L352.8 450.1 L351.0 451.0 L349.2 451.8 L347.4 452.7 L345.6 453.5 L343.8 454.4 L342.0 455.3 L340.2 456.2 L338.4 457.1 L336.6 458.0 L334.9 459.0 L333.1 459.9 L331.3 460.9 L329.6 461.8 L327.9 462.8 L326.1 463.8 L324.4 464.8 L322.7 465.8 L320.9 466.9 L319.2 467.9 L317.5 469.0 L315.8 470.0 L314.2 471.1 L312.5 472.2 L310.8 473.3 L309.1 474.4 L307.5 475.5 L305.8 476.6 L304.2 477.8 L302.5 478.9 L300.9 480.1 L299.3 481.2 L297.7 482.4 L296.1 483.6 L294.5 484.8 L292.9 486.0 L291.3 487.3 L289.7 488.5 L288.2 489.7 L286.6 491.0 L285.1 492.3 L283.5 493.5 L282.0 494.8 L280.5 496.1 L279.0 497.4 L277.5 498.7 L276.0 500.1 L274.5 501.4 L273.0 502.8 L271.5 504.1 L270.1 505.5 L268.6 506.9 L267.2 508.2 L265.7 509.6 L264.3 511.0 L262.9 512.5 L261.5 513.9 L260.1 515.3 L258.7 516.8 L257.3 518.2 L256.0 519.7 L254.6 521.1 L253.3 522.6 L251.9 524.1 L250.6 525.6 L249.3 527.1 L248.0 528.6 L246.7 530.1 L245.4 531.7 L244.1 533.2 L242.8 534.7 L241.6 536.3 L240.3 537.9 L239.1 539.4 L237.9 541.0 L236.7 542.6 L235.5 544.2 L234.3 545.8 L233.1 547.4 L231.9 549.0 L230.7 550.7 L230.0 551.8" fill="none" stroke="#6a7a88" stroke-width="1" stroke-dasharray="1 1.5" opacity="0.8"/><path fill="#6c747c" d="M760.3 422.0h2.8v2.8h-2.8zM789.9 422.0h2.8v2.8h-2.8zM819.5 422.0h2.8v2.8h-2.8zM849.1 422.0h2.8v2.8h-2.8zM878.7 422.0h2.8v2.8h-2.8zM908.3 422.0h2.8v2.8h-2.8zM937.9 422.0h2.8v2.8h-2.8zM967.5 422.0h2.8v2.8h-2.8zM997.1 422.0h2.8v2.8h-2.8zM1026.7 422.0h2.8v2.8h-2.8zM1056.3 422.0h2.8v2.8h-2.8zM1085.9 422.0h2.8v2.8h-2.8zM1115.5 422.0h2.8v2.8h-2.8zM1145.1 422.0h2.8v2.8h-2.8zM1174.7 422.0h2.8v2.8h-2.8zM1204.3 422.0h2.8v2.8h-2.8zM711.4 422.0h2.8v2.8h-2.8zM681.6 422.0h2.8v2.8h-2.8zM651.8 422.0h2.8v2.8h-2.8zM622.0 422.0h2.8v2.8h-2.8zM592.2 422.0h2.8v2.8h-2.8zM562.4 422.0h2.8v2.8h-2.8zM532.6 422.0h2.8v2.8h-2.8zM502.8 422.0h2.8v2.8h-2.8zM475.6 422.0h2.8v2.8h-2.8zM445.6 423.5h2.8v2.8h-2.8zM416.0 427.9h2.8v2.8h-2.8zM386.9 435.3h2.8v2.8h-2.8zM358.7 445.5h2.8v2.8h-2.8zM331.7 458.5h2.8v2.8h-2.8zM306.1 474.1h2.8v2.8h-2.8zM282.1 492.1h2.8v2.8h-2.8zM260.1 512.5h2.8v2.8h-2.8zM240.2 534.9h2.8v2.8h-2.8z"/><rect x="729.1" y="420.4" width="6" height="6" fill="#7f7f7f"/><path d="M1227.0 456.6 L479.3 456.6 L477.3 456.6 L475.3 456.6 L473.3 456.7 L471.3 456.7 L469.3 456.8 L467.3 456.9 L465.3 457.0 L463.3 457.1 L461.3 457.2 L459.3 457.3 L457.3 457.5 L455.3 457.7 L453.3 457.8 L451.3 458.0 L449.4 458.3 L447.4 458.5 L445.4 458.7 L443.4 459.0 L441.4 459.3 L439.4 459.5 L437.5 459.8 L435.5 460.2 L433.5 460.5 L431.6 460.8 L429.6 461.2 L427.6 461.6 L425.7 462.0 L423.7 462.4 L421.7 462.8 L419.8 463.2 L417.8 463.7 L415.9 464.1 L414.0 464.6 L412.0 465.1 L410.1 465.6 L408.1 466.1 L406.2 466.6 L404.3 467.2 L402.4 467.7 L400.5 468.3 L398.5 468.9 L396.6 469.5 L394.7 470.1 L392.8 470.8 L390.9 471.4 L389.1 472.1 L387.2 472.7 L385.3 473.4 L383.4 474.1 L381.6 474.8 L379.7 475.6 L377.8 476.3 L376.0 477.1 L374.1 477.8 L372.3 478.6 L370.5 479.4 L368.6 480.2 L366.8 481.0 L365.0 481.9 L363.2 482.7 L361.4 483.6 L359.6 484.5 L357.8 485.4 L356.0 486.3 L354.2 487.2 L352.5 488.1 L350.7 489.1 L348.9 490.0 L347.2 491.0 L345.4 492.0 L343.7 493.0 L342.0 494.0 L340.3 495.0 L338.5 496.0 L336.8 497.1 L335.1 498.1 L333.5 499.2 L331.8 500.3 L330.1 501.4 L328.4 502.5 L326.8 503.6 L325.1 504.7 L323.5 505.9 L321.9 507.0 L320.2 508.2 L318.6 509.4 L317.0 510.6 L315.4 511.8 L313.8 513.0 L312.2 514.2 L310.7 515.5 L309.1 516.7 L307.6 518.0 L306.0 519.2 L304.5 520.5 L303.0 521.8 L301.5 523.1 L299.9 524.4 L298.5 525.8 L297.0 527.1 L295.5 528.5 L294.0 529.8 L292.6 531.2 L291.1 532.6 L289.7 534.0 L288.3 535.4 L286.9 536.8 L285.5 538.2 L284.1 539.7 L282.7 541.1 L281.3 542.6 L279.9 544.0 L278.6 545.5 L277.3 547.0 L275.9 548.5 L274.6 550.0 L273.3 551.5 L272.0 553.0 L270.7 554.6 L269.5 556.1 L268.2 557.7 L267.0 559.2 L265.7 560.8 L264.5 562.4 L263.3 564.0 L262.1 565.6 L260.9 567.2 L259.7 568.8 L258.5 570.4 L257.4 572.0 L256.2 573.7 L255.1 575.3 L254.0 577.0 L252.9 578.7 L251.8 580.3 L250.7 582.0 L249.7 583.7 L248.6 585.4 L247.6 587.1 L246.5 588.8 L245.5 590.6 L244.5 592.3 L243.5 594.0 L242.5 595.8 L241.6 597.5 L240.6 599.3 L239.7 601.0 L238.7 602.8 L237.8 604.6 L236.9 606.4 L236.0 608.2 L235.2 610.0 L234.3 611.8 L233.5 613.6 L232.6 615.4 L231.8 617.2 L231.0 619.0 L230.2 620.9 L230.0 621.4" fill="none" stroke="#000" stroke-width="1" stroke-dasharray="1 1.2" opacity="0.7"/><path fill="#000" d="M730.9 455.4h2.5v2.5h-2.5zM738.3 455.4h2.5v2.5h-2.5zM745.7 455.4h2.5v2.5h-2.5zM753.1 455.4h2.5v2.5h-2.5zM760.5 455.4h2.5v2.5h-2.5zM767.9 455.4h2.5v2.5h-2.5zM775.4 455.4h2.5v2.5h-2.5zM782.8 455.4h2.5v2.5h-2.5zM790.2 455.4h2.5v2.5h-2.5zM797.6 455.4h2.5v2.5h-2.5zM805.0 455.4h2.5v2.5h-2.5zM812.5 455.4h2.5v2.5h-2.5zM819.9 455.4h2.5v2.5h-2.5zM827.3 455.4h2.5v2.5h-2.5zM834.7 455.4h2.5v2.5h-2.5zM842.1 455.4h2.5v2.5h-2.5zM849.6 455.4h2.5v2.5h-2.5zM857.0 455.4h2.5v2.5h-2.5zM864.4 455.4h2.5v2.5h-2.5zM871.8 455.4h2.5v2.5h-2.5zM879.2 455.4h2.5v2.5h-2.5zM886.7 455.4h2.5v2.5h-2.5zM894.1 455.4h2.5v2.5h-2.5zM901.5 455.4h2.5v2.5h-2.5zM908.9 455.4h2.5v2.5h-2.5zM916.3 455.4h2.5v2.5h-2.5zM923.8 455.4h2.5v2.5h-2.5zM931.2 455.4h2.5v2.5h-2.5zM938.6 455.4h2.5v2.5h-2.5zM946.0 455.4h2.5v2.5h-2.5zM953.4 455.4h2.5v2.5h-2.5zM960.9 455.4h2.5v2.5h-2.5zM968.3 455.4h2.5v2.5h-2.5zM975.7 455.4h2.5v2.5h-2.5zM983.1 455.4h2.5v2.5h-2.5zM990.5 455.4h2.5v2.5h-2.5zM998.0 455.4h2.5v2.5h-2.5zM1005.4 455.4h2.5v2.5h-2.5zM1012.8 455.4h2.5v2.5h-2.5zM1020.2 455.4h2.5v2.5h-2.5zM1027.6 455.4h2.5v2.5h-2.5zM1035.1 455.4h2.5v2.5h-2.5zM1042.5 455.4h2.5v2.5h-2.5zM1049.9 455.4h2.5v2.5h-2.5zM1057.3 455.4h2.5v2.5h-2.5zM1064.7 455.4h2.5v2.5h-2.5zM1072.2 455.4h2.5v2.5h-2.5zM1079.6 455.4h2.5v2.5h-2.5zM1087.0 455.4h2.5v2.5h-2.5zM1094.4 455.4h2.5v2.5h-2.5zM1101.8 455.4h2.5v2.5h-2.5zM1109.3 455.4h2.5v2.5h-2.5zM1116.7 455.4h2.5v2.5h-2.5zM1124.1 455.4h2.5v2.5h-2.5zM1131.5 455.4h2.5v2.5h-2.5zM1138.9 455.4h2.5v2.5h-2.5zM1146.4 455.4h2.5v2.5h-2.5zM1153.8 455.4h2.5v2.5h-2.5zM1161.2 455.4h2.5v2.5h-2.5zM1168.6 455.4h2.5v2.5h-2.5zM1176.0 455.4h2.5v2.5h-2.5zM1183.5 455.4h2.5v2.5h-2.5zM1190.9 455.4h2.5v2.5h-2.5zM1198.3 455.4h2.5v2.5h-2.5zM1205.7 455.4h2.5v2.5h-2.5zM1213.1 455.4h2.5v2.5h-2.5zM1220.6 455.4h2.5v2.5h-2.5zM723.5 455.4h2.5v2.5h-2.5zM716.1 455.4h2.5v2.5h-2.5zM708.7 455.4h2.5v2.5h-2.5zM701.3 455.4h2.5v2.5h-2.5zM693.9 455.4h2.5v2.5h-2.5zM686.5 455.4h2.5v2.5h-2.5zM679.1 455.4h2.5v2.5h-2.5zM671.7 455.4h2.5v2.5h-2.5zM664.3 455.4h2.5v2.5h-2.5zM656.9 455.4h2.5v2.5h-2.5zM649.5 455.4h2.5v2.5h-2.5zM642.1 455.4h2.5v2.5h-2.5zM634.7 455.4h2.5v2.5h-2.5zM627.3 455.4h2.5v2.5h-2.5zM619.9 455.4h2.5v2.5h-2.5zM612.5 455.4h2.5v2.5h-2.5zM605.1 455.4h2.5v2.5h-2.5zM597.7 455.4h2.5v2.5h-2.5zM590.3 455.4h2.5v2.5h-2.5zM582.9 455.4h2.5v2.5h-2.5zM575.5 455.4h2.5v2.5h-2.5zM568.1 455.4h2.5v2.5h-2.5zM560.7 455.4h2.5v2.5h-2.5zM553.3 455.4h2.5v2.5h-2.5zM545.9 455.4h2.5v2.5h-2.5zM538.5 455.4h2.5v2.5h-2.5zM531.1 455.4h2.5v2.5h-2.5zM523.7 455.4h2.5v2.5h-2.5zM516.3 455.4h2.5v2.5h-2.5zM508.9 455.4h2.5v2.5h-2.5zM501.5 455.4h2.5v2.5h-2.5zM494.1 455.4h2.5v2.5h-2.5zM486.7 455.4h2.5v2.5h-2.5zM479.3 455.4h2.5v2.5h-2.5zM471.9 455.4h2.5v2.5h-2.5zM464.5 455.7h2.5v2.5h-2.5zM457.2 456.2h2.5v2.5h-2.5zM449.9 456.8h2.5v2.5h-2.5zM442.6 457.7h2.5v2.5h-2.5zM435.3 458.7h2.5v2.5h-2.5zM428.0 460.0h2.5v2.5h-2.5zM420.8 461.5h2.5v2.5h-2.5zM413.7 463.1h2.5v2.5h-2.5zM406.6 465.0h2.5v2.5h-2.5zM399.5 467.0h2.5v2.5h-2.5zM392.5 469.2h2.5v2.5h-2.5zM385.5 471.6h2.5v2.5h-2.5zM378.7 474.2h2.5v2.5h-2.5zM371.9 477.0h2.5v2.5h-2.5zM365.2 480.0h2.5v2.5h-2.5zM358.5 483.1h2.5v2.5h-2.5zM352.0 486.5h2.5v2.5h-2.5zM345.5 490.0h2.5v2.5h-2.5zM339.1 493.7h2.5v2.5h-2.5zM332.9 497.5h2.5v2.5h-2.5zM326.7 501.5h2.5v2.5h-2.5zM320.7 505.7h2.5v2.5h-2.5zM314.8 510.1h2.5v2.5h-2.5zM309.0 514.6h2.5v2.5h-2.5zM303.3 519.2h2.5v2.5h-2.5zM297.7 524.1h2.5v2.5h-2.5zM292.3 529.0h2.5v2.5h-2.5zM287.0 534.1h2.5v2.5h-2.5zM281.9 539.4h2.5v2.5h-2.5zM276.9 544.8h2.5v2.5h-2.5zM272.0 550.3h2.5v2.5h-2.5zM267.3 555.9h2.5v2.5h-2.5zM262.8 561.7h2.5v2.5h-2.5zM258.4 567.6h2.5v2.5h-2.5zM254.2 573.6h2.5v2.5h-2.5zM250.1 579.8h2.5v2.5h-2.5zM246.2 586.0h2.5v2.5h-2.5zM242.5 592.3h2.5v2.5h-2.5zM239.0 598.8h2.5v2.5h-2.5z"/><rect x="729.1" y="453.6" width="6" height="6" fill="#000"/><path d="M1227.0 489.8 L473.3 489.8 L471.3 489.8 L469.3 489.8 L467.3 489.9 L465.3 490.0 L463.3 490.0 L461.3 490.1 L459.3 490.3 L457.3 490.4 L455.3 490.6 L453.3 490.7 L451.3 490.9 L449.4 491.1 L447.4 491.4 L445.4 491.6 L443.4 491.9 L441.4 492.2 L439.4 492.5 L437.5 492.8 L435.5 493.2 L433.5 493.5 L431.6 493.9 L429.6 494.3 L427.7 494.7 L425.7 495.2 L423.8 495.6 L421.8 496.1 L419.9 496.6 L417.9 497.1 L416.0 497.6 L414.1 498.1 L412.2 498.7 L410.2 499.3 L408.3 499.9 L406.4 500.5 L404.5 501.1 L402.6 501.8 L400.7 502.4 L398.9 503.1 L397.0 503.8 L395.1 504.5 L393.3 505.2 L391.4 506.0 L389.6 506.7 L387.7 507.5 L385.9 508.3 L384.0 509.1 L382.2 509.9 L380.4 510.8 L378.6 511.6 L376.8 512.5 L375.0 513.4 L373.2 514.3 L371.5 515.2 L369.7 516.2 L367.9 517.1 L366.2 518.1 L364.4 519.1 L362.7 520.0 L361.0 521.1 L359.2 522.1 L357.5 523.1 L355.8 524.2 L354.1 525.2 L352.5 526.3 L350.8 527.4 L349.1 528.5 L347.5 529.6 L345.8 530.8 L344.2 531.9 L342.5 533.1 L340.9 534.2 L339.3 535.4 L337.7 536.6 L336.1 537.8 L334.5 539.1 L333.0 540.3 L331.4 541.5 L329.8 542.8 L328.3 544.1 L326.8 545.4 L325.3 546.7 L323.7 548.0 L322.2 549.3 L320.7 550.6 L319.3 552.0 L317.8 553.3 L316.3 554.7 L314.9 556.1 L313.4 557.4 L312.0 558.8 L310.6 560.3 L309.2 561.7 L307.8 563.1 L306.4 564.5 L305.0 566.0 L303.6 567.5 L302.3 568.9 L300.9 570.4 L299.6 571.9 L298.3 573.4 L297.0 574.9 L295.7 576.4 L294.4 577.9 L293.1 579.5 L291.8 581.0 L290.6 582.6 L289.3 584.1 L288.1 585.7 L286.9 587.3 L285.7 588.9 L284.5 590.5 L283.3 592.1 L282.1 593.7 L280.9 595.3 L279.8 597.0 L278.6 598.6 L277.5 600.2 L276.3 601.9 L275.2 603.6 L274.1 605.2 L273.0 606.9 L272.0 608.6 L270.9 610.3 L269.8 612.0 L268.8 613.7 L267.8 615.4 L266.7 617.1 L265.7 618.8 L264.7 620.6 L263.7 622.3 L262.7 624.0 L261.8 625.8 L260.8 627.6 L259.9 629.3 L258.9 631.1 L258.0 632.9 L257.1 634.6 L256.2 636.4 L255.3 638.2 L254.5 640.0 L253.6 641.8 L252.7 643.6 L251.9 645.4 L251.1 647.3 L250.2 649.1 L249.4 650.9 L248.6 652.8 L247.9 654.6 L247.1 656.4 L246.3 658.3 L245.6 660.1 L244.8 662.0 L244.1 663.9 L243.4 665.7 L242.7 667.6 L242.0 669.5 L241.3 671.4 L240.6 673.2 L240.0 675.1 L239.3 677.0 L238.7 678.9 L238.1 680.8 L237.5 682.7 L236.9 684.6 L236.3 686.5 L235.7 688.5 L235.1 690.4 L234.6 692.3 L234.0 694.2 L233.5 696.1 L233.0 698.1 L232.4 700.0 L231.9 701.9 L231.5 703.9 L231.0 705.8 L230.5 707.8 L230.2 709.0" fill="none" stroke="#6a7a88" stroke-width="1" stroke-dasharray="1 1.5" opacity="0.7"/><path d="M1227.0 489.8 L473.3 489.8 L471.3 489.8 L469.3 489.8 L467.3 489.9 L465.3 490.0 L463.3 490.0 L461.3 490.1 L459.3 490.3 L457.3 490.4 L455.3 490.6 L453.3 490.7 L451.3 490.9 L449.4 491.1 L447.4 491.4 L445.4 491.6 L443.4 491.9 L441.4 492.2 L439.4 492.5 L437.5 492.8 L435.5 493.2 L433.5 493.5 L431.6 493.9 L429.6 494.3 L427.7 494.7 L425.7 495.2 L423.8 495.6 L421.8 496.1 L419.9 496.6 L417.9 497.1 L416.0 497.6 L414.1 498.1 L412.2 498.7 L410.2 499.3 L408.3 499.9 L406.4 500.5 L404.5 501.1 L402.6 501.8 L400.7 502.4 L398.9 503.1 L397.0 503.8 L395.1 504.5 L393.3 505.2 L391.4 506.0 L389.6 506.7 L387.7 507.5 L385.9 508.3 L384.0 509.1 L382.2 509.9 L380.4 510.8 L378.6 511.6 L376.8 512.5 L375.0 513.4 L373.2 514.3 L371.5 515.2 L369.7 516.2 L367.9 517.1 L366.2 518.1 L364.4 519.1 L362.7 520.0 L361.0 521.1 L359.2 522.1 L357.5 523.1 L355.8 524.2 L354.1 525.2 L352.5 526.3 L350.8 527.4 L349.1 528.5 L347.5 529.6 L345.8 530.8 L344.2 531.9 L342.5 533.1 L340.9 534.2 L339.3 535.4 L337.7 536.6 L336.1 537.8 L334.5 539.1 L333.0 540.3 L331.4 541.5 L329.8 542.8 L328.3 544.1 L326.8 545.4 L325.3 546.7 L323.7 548.0 L322.2 549.3 L320.7 550.6 L319.3 552.0 L317.8 553.3 L316.3 554.7 L314.9 556.1 L313.4 557.4 L312.0 558.8 L310.6 560.3 L309.2 561.7 L307.8 563.1 L306.4 564.5 L305.0 566.0 L303.6 567.5 L302.3 568.9 L300.9 570.4 L299.6 571.9 L298.3 573.4 L297.0 574.9 L295.7 576.4 L294.4 577.9 L293.1 579.5 L291.8 581.0 L290.6 582.6 L289.3 584.1 L288.1 585.7 L286.9 587.3 L285.7 588.9 L284.5 590.5 L283.3 592.1 L282.1 593.7 L280.9 595.3 L279.8 597.0 L278.6 598.6 L277.5 600.2 L276.3 601.9 L275.2 603.6 L274.1 605.2 L273.0 606.9 L272.0 608.6 L270.9 610.3 L269.8 612.0 L268.8 613.7 L267.8 615.4 L266.7 617.1 L265.7 618.8 L264.7 620.6 L263.7 622.3 L262.7 624.0 L261.8 625.8 L260.8 627.6 L259.9 629.3 L258.9 631.1 L258.0 632.9 L257.1 634.6 L256.2 636.4 L255.3 638.2 L254.5 640.0 L253.6 641.8 L252.7 643.6 L251.9 645.4 L251.1 647.3 L250.2 649.1 L249.4 650.9 L248.6 652.8 L247.9 654.6 L247.1 656.4 L246.3 658.3 L245.6 660.1 L244.8 662.0 L244.1 663.9 L243.4 665.7 L242.7 667.6 L242.0 669.5 L241.3 671.4 L240.6 673.2 L240.0 675.1 L239.3 677.0 L238.7 678.9 L238.1 680.8 L237.5 682.7 L236.9 684.6 L236.3 686.5 L235.7 688.5 L235.1 690.4 L234.6 692.3 L234.0 694.2 L233.5 696.1 L233.0 698.1 L232.4 700.0 L231.9 701.9 L231.5 703.9 L231.0 705.8 L230.5 707.8 L230.2 709.0" fill="none" stroke="#f0a06a" stroke-width="1.1" stroke-dasharray="45 45" opacity="0.9"/><path fill="#6c747c" d="M760.3 488.4h2.8v2.8h-2.8zM789.9 488.4h2.8v2.8h-2.8zM819.5 488.4h2.8v2.8h-2.8zM849.1 488.4h2.8v2.8h-2.8zM878.7 488.4h2.8v2.8h-2.8zM908.3 488.4h2.8v2.8h-2.8zM937.9 488.4h2.8v2.8h-2.8zM967.5 488.4h2.8v2.8h-2.8zM997.1 488.4h2.8v2.8h-2.8zM1026.7 488.4h2.8v2.8h-2.8zM1056.3 488.4h2.8v2.8h-2.8zM1085.9 488.4h2.8v2.8h-2.8zM1115.5 488.4h2.8v2.8h-2.8zM1145.1 488.4h2.8v2.8h-2.8zM1174.7 488.4h2.8v2.8h-2.8zM1204.3 488.4h2.8v2.8h-2.8zM711.4 488.4h2.8v2.8h-2.8zM681.6 488.4h2.8v2.8h-2.8zM651.8 488.4h2.8v2.8h-2.8zM622.0 488.4h2.8v2.8h-2.8zM592.2 488.4h2.8v2.8h-2.8zM562.4 488.4h2.8v2.8h-2.8zM532.6 488.4h2.8v2.8h-2.8zM502.8 488.4h2.8v2.8h-2.8zM474.4 488.4h2.8v2.8h-2.8zM451.1 489.4h2.8v2.8h-2.8zM428.1 492.9h2.8v2.8h-2.8zM405.6 498.9h2.8v2.8h-2.8zM383.8 507.2h2.8v2.8h-2.8zM363.0 517.7h2.8v2.8h-2.8zM343.3 530.1h2.8v2.8h-2.8zM324.9 544.3h2.8v2.8h-2.8zM307.8 560.2h2.8v2.8h-2.8zM292.2 577.5h2.8v2.8h-2.8zM278.1 596.0h2.8v2.8h-2.8zM265.4 615.5h2.8v2.8h-2.8zM254.3 636.0h2.8v2.8h-2.8zM244.8 657.3h2.8v2.8h-2.8zM236.8 679.1h2.8v2.8h-2.8z"/><rect x="729.1" y="486.8" width="6" height="6" fill="#7f7f7f"/><path d="M1227.0 523.0 L476.7 523.0 L474.7 523.0 L472.7 523.0 L470.7 523.1 L468.7 523.2 L466.7 523.3 L464.7 523.4 L462.7 523.5 L460.7 523.7 L458.7 523.9 L456.7 524.1 L454.8 524.3 L452.8 524.6 L450.8 524.8 L448.8 525.1 L446.8 525.4 L444.9 525.8 L442.9 526.1 L440.9 526.5 L439.0 526.9 L437.0 527.3 L435.1 527.8 L433.1 528.2 L431.2 528.7 L429.2 529.2 L427.3 529.7 L425.4 530.3 L423.5 530.8 L421.6 531.4 L419.6 532.0 L417.7 532.6 L415.8 533.3 L414.0 533.9 L412.1 534.6 L410.2 535.3 L408.3 536.0 L406.5 536.8 L404.6 537.5 L402.8 538.3 L401.0 539.1 L399.1 539.9 L397.3 540.8 L395.5 541.6 L393.7 542.5 L391.9 543.3 L390.1 544.2 L388.3 545.2 L386.6 546.1 L384.8 547.1 L383.1 548.0 L381.3 549.0 L379.6 550.0 L377.9 551.0 L376.2 552.1 L374.5 553.1 L372.8 554.2 L371.1 555.3 L369.4 556.4 L367.7 557.5 L366.1 558.6 L364.5 559.7 L362.8 560.9 L361.2 562.1 L359.6 563.3 L358.0 564.5 L356.4 565.7 L354.8 566.9 L353.3 568.2 L351.7 569.4 L350.2 570.7 L348.6 572.0 L347.1 573.3 L345.6 574.6 L344.1 575.9 L342.6 577.2 L341.1 578.6 L339.7 579.9 L338.2 581.3 L336.8 582.7 L335.3 584.1 L333.9 585.5 L332.5 586.9 L331.1 588.4 L329.7 589.8 L328.3 591.2 L327.0 592.7 L325.6 594.2 L324.3 595.7 L323.0 597.2 L321.6 598.7 L320.3 600.2 L319.1 601.7 L317.8 603.3 L316.5 604.8 L315.2 606.4 L314.0 607.9 L312.8 609.5 L311.5 611.1 L310.3 612.7 L309.1 614.3 L308.0 615.9 L306.8 617.5 L305.6 619.1 L304.5 620.8 L303.3 622.4 L302.2 624.1 L301.1 625.7 L300.0 627.4 L298.9 629.1 L297.8 630.8 L296.8 632.4 L295.7 634.1 L294.7 635.9 L293.6 637.6 L292.6 639.3 L291.6 641.0 L290.6 642.8 L289.6 644.5 L288.6 646.2 L287.7 648.0 L286.7 649.8 L285.8 651.5 L284.9 653.3 L284.0 655.1 L283.1 656.9 L282.2 658.7 L281.3 660.5 L280.4 662.3 L279.6 664.1 L278.7 665.9 L277.9 667.7 L277.1 669.5 L276.3 671.4 L275.5 673.2 L274.7 675.0 L273.9 676.9 L273.2 678.7 L272.4 680.6 L271.7 682.4 L271.0 684.3 L270.3 686.2 L269.6 688.1 L268.9 689.9 L268.2 691.8 L267.5 693.7 L266.9 695.6 L266.3 697.5 L265.6 699.4 L265.0 701.3 L264.4 703.2 L263.8 705.1 L263.2 707.0 L262.6 708.9 L262.6 709.0" fill="none" stroke="#000" stroke-width="1" stroke-dasharray="1 1.2" opacity="0.7"/><path fill="#000" d="M730.9 521.8h2.5v2.5h-2.5zM738.3 521.8h2.5v2.5h-2.5zM745.7 521.8h2.5v2.5h-2.5zM753.1 521.8h2.5v2.5h-2.5zM760.5 521.8h2.5v2.5h-2.5zM767.9 521.8h2.5v2.5h-2.5zM775.4 521.8h2.5v2.5h-2.5zM782.8 521.8h2.5v2.5h-2.5zM790.2 521.8h2.5v2.5h-2.5zM797.6 521.8h2.5v2.5h-2.5zM805.0 521.8h2.5v2.5h-2.5zM812.5 521.8h2.5v2.5h-2.5zM819.9 521.8h2.5v2.5h-2.5zM827.3 521.8h2.5v2.5h-2.5zM834.7 521.8h2.5v2.5h-2.5zM842.1 521.8h2.5v2.5h-2.5zM849.6 521.8h2.5v2.5h-2.5zM857.0 521.8h2.5v2.5h-2.5zM864.4 521.8h2.5v2.5h-2.5zM871.8 521.8h2.5v2.5h-2.5zM879.2 521.8h2.5v2.5h-2.5zM886.7 521.8h2.5v2.5h-2.5zM894.1 521.8h2.5v2.5h-2.5zM901.5 521.8h2.5v2.5h-2.5zM908.9 521.8h2.5v2.5h-2.5zM916.3 521.8h2.5v2.5h-2.5zM923.8 521.8h2.5v2.5h-2.5zM931.2 521.8h2.5v2.5h-2.5zM938.6 521.8h2.5v2.5h-2.5zM946.0 521.8h2.5v2.5h-2.5zM953.4 521.8h2.5v2.5h-2.5zM960.9 521.8h2.5v2.5h-2.5zM968.3 521.8h2.5v2.5h-2.5zM975.7 521.8h2.5v2.5h-2.5zM983.1 521.8h2.5v2.5h-2.5zM990.5 521.8h2.5v2.5h-2.5zM998.0 521.8h2.5v2.5h-2.5zM1005.4 521.8h2.5v2.5h-2.5zM1012.8 521.8h2.5v2.5h-2.5zM1020.2 521.8h2.5v2.5h-2.5zM1027.6 521.8h2.5v2.5h-2.5zM1035.1 521.8h2.5v2.5h-2.5zM1042.5 521.8h2.5v2.5h-2.5zM1049.9 521.8h2.5v2.5h-2.5zM1057.3 521.8h2.5v2.5h-2.5zM1064.7 521.8h2.5v2.5h-2.5zM1072.2 521.8h2.5v2.5h-2.5zM1079.6 521.8h2.5v2.5h-2.5zM1087.0 521.8h2.5v2.5h-2.5zM1094.4 521.8h2.5v2.5h-2.5zM1101.8 521.8h2.5v2.5h-2.5zM1109.3 521.8h2.5v2.5h-2.5zM1116.7 521.8h2.5v2.5h-2.5zM1124.1 521.8h2.5v2.5h-2.5zM1131.5 521.8h2.5v2.5h-2.5zM1138.9 521.8h2.5v2.5h-2.5zM1146.4 521.8h2.5v2.5h-2.5zM1153.8 521.8h2.5v2.5h-2.5zM1161.2 521.8h2.5v2.5h-2.5zM1168.6 521.8h2.5v2.5h-2.5zM1176.0 521.8h2.5v2.5h-2.5zM1183.5 521.8h2.5v2.5h-2.5zM1190.9 521.8h2.5v2.5h-2.5zM1198.3 521.8h2.5v2.5h-2.5zM1205.7 521.8h2.5v2.5h-2.5zM1213.1 521.8h2.5v2.5h-2.5zM1220.6 521.8h2.5v2.5h-2.5zM723.5 521.8h2.5v2.5h-2.5zM716.1 521.8h2.5v2.5h-2.5zM708.7 521.8h2.5v2.5h-2.5zM701.3 521.8h2.5v2.5h-2.5zM693.9 521.8h2.5v2.5h-2.5zM686.5 521.8h2.5v2.5h-2.5zM679.1 521.8h2.5v2.5h-2.5zM671.7 521.8h2.5v2.5h-2.5zM664.3 521.8h2.5v2.5h-2.5zM656.9 521.8h2.5v2.5h-2.5zM649.5 521.8h2.5v2.5h-2.5zM642.1 521.8h2.5v2.5h-2.5zM634.7 521.8h2.5v2.5h-2.5zM627.3 521.8h2.5v2.5h-2.5zM619.9 521.8h2.5v2.5h-2.5zM612.5 521.8h2.5v2.5h-2.5zM605.1 521.8h2.5v2.5h-2.5zM597.7 521.8h2.5v2.5h-2.5zM590.3 521.8h2.5v2.5h-2.5zM582.9 521.8h2.5v2.5h-2.5zM575.5 521.8h2.5v2.5h-2.5zM568.1 521.8h2.5v2.5h-2.5zM560.7 521.8h2.5v2.5h-2.5zM553.3 521.8h2.5v2.5h-2.5zM545.9 521.8h2.5v2.5h-2.5zM538.5 521.8h2.5v2.5h-2.5zM531.1 521.8h2.5v2.5h-2.5zM523.7 521.8h2.5v2.5h-2.5zM516.3 521.8h2.5v2.5h-2.5zM508.9 521.8h2.5v2.5h-2.5zM501.5 521.8h2.5v2.5h-2.5zM494.1 521.8h2.5v2.5h-2.5zM486.7 521.8h2.5v2.5h-2.5zM479.3 521.8h2.5v2.5h-2.5zM471.9 521.8h2.5v2.5h-2.5zM464.5 522.1h2.5v2.5h-2.5zM457.2 522.7h2.5v2.5h-2.5zM449.9 523.5h2.5v2.5h-2.5zM442.6 524.7h2.5v2.5h-2.5zM435.4 526.2h2.5v2.5h-2.5zM428.3 527.9h2.5v2.5h-2.5zM421.2 529.9h2.5v2.5h-2.5zM414.2 532.2h2.5v2.5h-2.5zM407.3 534.7h2.5v2.5h-2.5zM400.5 537.5h2.5v2.5h-2.5zM393.8 540.5h2.5v2.5h-2.5zM387.3 543.8h2.5v2.5h-2.5zM380.8 547.3h2.5v2.5h-2.5zM374.5 551.1h2.5v2.5h-2.5zM368.3 555.0h2.5v2.5h-2.5zM362.2 559.2h2.5v2.5h-2.5zM356.3 563.6h2.5v2.5h-2.5zM350.5 568.1h2.5v2.5h-2.5zM344.9 572.8h2.5v2.5h-2.5zM339.4 577.7h2.5v2.5h-2.5zM334.1 582.8h2.5v2.5h-2.5zM329.0 588.0h2.5v2.5h-2.5zM323.9 593.4h2.5v2.5h-2.5zM319.1 598.9h2.5v2.5h-2.5zM314.4 604.6h2.5v2.5h-2.5zM309.9 610.4h2.5v2.5h-2.5zM305.5 616.3h2.5v2.5h-2.5zM301.3 622.3h2.5v2.5h-2.5zM297.2 628.5h2.5v2.5h-2.5zM293.4 634.7h2.5v2.5h-2.5zM289.6 641.0h2.5v2.5h-2.5zM286.1 647.5h2.5v2.5h-2.5zM282.7 654.0h2.5v2.5h-2.5zM279.4 660.6h2.5v2.5h-2.5zM276.3 667.2h2.5v2.5h-2.5zM273.4 674.0h2.5v2.5h-2.5zM270.6 680.8h2.5v2.5h-2.5zM268.0 687.6h2.5v2.5h-2.5zM265.6 694.6h2.5v2.5h-2.5z"/><rect x="729.1" y="520.0" width="6" height="6" fill="#000"/><path d="M1227.0 556.2 L473.7 556.2 L471.7 556.2 L469.7 556.3 L467.7 556.3 L465.7 556.4 L463.7 556.5 L461.7 556.7 L459.7 556.9 L457.7 557.1 L455.7 557.3 L453.8 557.6 L451.8 557.9 L449.8 558.2 L447.8 558.5 L445.9 558.9 L443.9 559.3 L442.0 559.7 L440.0 560.1 L438.1 560.6 L436.1 561.1 L434.2 561.6 L432.3 562.2 L430.4 562.8 L428.4 563.4 L426.5 564.0 L424.7 564.6 L422.8 565.3 L420.9 566.0 L419.0 566.7 L417.2 567.5 L415.3 568.2 L413.5 569.0 L411.7 569.8 L409.8 570.7 L408.0 571.5 L406.2 572.4 L404.5 573.3 L402.7 574.2 L400.9 575.2 L399.2 576.1 L397.4 577.1 L395.7 578.1 L394.0 579.2 L392.3 580.2 L390.6 581.3 L388.9 582.3 L387.2 583.4 L385.6 584.6 L383.9 585.7 L382.3 586.9 L380.7 588.0 L379.1 589.2 L377.5 590.4 L375.9 591.7 L374.3 592.9 L372.8 594.2 L371.2 595.4 L369.7 596.7 L368.2 598.0 L366.7 599.4 L365.2 600.7 L363.7 602.0 L362.3 603.4 L360.8 604.8 L359.4 606.2 L358.0 607.6 L356.6 609.0 L355.2 610.4 L353.8 611.9 L352.4 613.4 L351.1 614.8 L349.7 616.3 L348.4 617.8 L347.1 619.3 L345.8 620.8 L344.5 622.4 L343.2 623.9 L342.0 625.5 L340.7 627.0 L339.5 628.6 L338.3 630.2 L337.1 631.8 L335.9 633.4 L334.7 635.0 L333.6 636.7 L332.4 638.3 L331.3 640.0 L330.2 641.6 L329.1 643.3 L328.0 645.0 L326.9 646.6 L325.8 648.3 L324.8 650.0 L323.7 651.7 L322.7 653.5 L321.7 655.2 L320.7 656.9 L319.7 658.7 L318.7 660.4 L317.8 662.2 L316.8 663.9 L315.9 665.7 L315.0 667.5 L314.1 669.3 L313.2 671.0 L312.3 672.8 L311.5 674.6 L310.6 676.4 L309.8 678.3 L308.9 680.1 L308.1 681.9 L307.3 683.7 L306.5 685.6 L305.8 687.4 L305.0 689.3 L304.2 691.1 L303.5 693.0 L302.8 694.9 L302.1 696.7 L301.4 698.6 L300.7 700.5 L300.0 702.4 L299.4 704.2 L298.7 706.1 L298.1 708.0 L297.7 709.0" fill="none" stroke="#f0a06a" stroke-width="1.2"/><path d="M1227.0 556.2 L473.7 556.2 L471.7 556.2 L469.7 556.3 L467.7 556.3 L465.7 556.4 L463.7 556.5 L461.7 556.7 L459.7 556.9 L457.7 557.1 L455.7 557.3 L453.8 557.6 L451.8 557.9 L449.8 558.2 L447.8 558.5 L445.9 558.9 L443.9 559.3 L442.0 559.7 L440.0 560.1 L438.1 560.6 L436.1 561.1 L434.2 561.6 L432.3 562.2 L430.4 562.8 L428.4 563.4 L426.5 564.0 L424.7 564.6 L422.8 565.3 L420.9 566.0 L419.0 566.7 L417.2 567.5 L415.3 568.2 L413.5 569.0 L411.7 569.8 L409.8 570.7 L408.0 571.5 L406.2 572.4 L404.5 573.3 L402.7 574.2 L400.9 575.2 L399.2 576.1 L397.4 577.1 L395.7 578.1 L394.0 579.2 L392.3 580.2 L390.6 581.3 L388.9 582.3 L387.2 583.4 L385.6 584.6 L383.9 585.7 L382.3 586.9 L380.7 588.0 L379.1 589.2 L377.5 590.4 L375.9 591.7 L374.3 592.9 L372.8 594.2 L371.2 595.4 L369.7 596.7 L368.2 598.0 L366.7 599.4 L365.2 600.7 L363.7 602.0 L362.3 603.4 L360.8 604.8 L359.4 606.2 L358.0 607.6 L356.6 609.0 L355.2 610.4 L353.8 611.9 L352.4 613.4 L351.1 614.8 L349.7 616.3 L348.4 617.8 L347.1 619.3 L345.8 620.8 L344.5 622.4 L343.2 623.9 L342.0 625.5 L340.7 627.0 L339.5 628.6 L338.3 630.2 L337.1 631.8 L335.9 633.4 L334.7 635.0 L333.6 636.7 L332.4 638.3 L331.3 640.0 L330.2 641.6 L329.1 643.3 L328.0 645.0 L326.9 646.6 L325.8 648.3 L324.8 650.0 L323.7 651.7 L322.7 653.5 L321.7 655.2 L320.7 656.9 L319.7 658.7 L318.7 660.4 L317.8 662.2 L316.8 663.9 L315.9 665.7 L315.0 667.5 L314.1 669.3 L313.2 671.0 L312.3 672.8 L311.5 674.6 L310.6 676.4 L309.8 678.3 L308.9 680.1 L308.1 681.9 L307.3 683.7 L306.5 685.6 L305.8 687.4 L305.0 689.3 L304.2 691.1 L303.5 693.0 L302.8 694.9 L302.1 696.7 L301.4 698.6 L300.7 700.5 L300.0 702.4 L299.4 704.2 L298.7 706.1 L298.1 708.0 L297.7 709.0" fill="none" stroke="#6a7a88" stroke-width="1" stroke-dasharray="1 1.5" opacity="0.6"/><path fill="#6c747c" d="M760.3 554.8h2.8v2.8h-2.8zM789.9 554.8h2.8v2.8h-2.8zM819.5 554.8h2.8v2.8h-2.8zM849.1 554.8h2.8v2.8h-2.8zM878.7 554.8h2.8v2.8h-2.8zM908.3 554.8h2.8v2.8h-2.8zM937.9 554.8h2.8v2.8h-2.8zM967.5 554.8h2.8v2.8h-2.8zM997.1 554.8h2.8v2.8h-2.8zM1026.7 554.8h2.8v2.8h-2.8zM1056.3 554.8h2.8v2.8h-2.8zM1085.9 554.8h2.8v2.8h-2.8zM1115.5 554.8h2.8v2.8h-2.8zM1145.1 554.8h2.8v2.8h-2.8zM1174.7 554.8h2.8v2.8h-2.8zM1204.3 554.8h2.8v2.8h-2.8zM711.4 554.8h2.8v2.8h-2.8zM681.6 554.8h2.8v2.8h-2.8zM651.8 554.8h2.8v2.8h-2.8zM622.0 554.8h2.8v2.8h-2.8zM592.2 554.8h2.8v2.8h-2.8zM562.4 554.8h2.8v2.8h-2.8zM532.6 554.8h2.8v2.8h-2.8zM502.8 554.8h2.8v2.8h-2.8zM475.5 554.8h2.8v2.8h-2.8zM459.0 555.4h2.8v2.8h-2.8zM442.7 557.8h2.8v2.8h-2.8zM426.8 562.1h2.8v2.8h-2.8zM411.4 567.9h2.8v2.8h-2.8zM396.6 575.4h2.8v2.8h-2.8zM382.7 584.2h2.8v2.8h-2.8zM369.6 594.2h2.8v2.8h-2.8zM357.4 605.3h2.8v2.8h-2.8zM346.2 617.4h2.8v2.8h-2.8zM335.8 630.3h2.8v2.8h-2.8zM326.4 643.8h2.8v2.8h-2.8zM317.9 658.0h2.8v2.8h-2.8zM310.4 672.6h2.8v2.8h-2.8zM303.7 687.7h2.8v2.8h-2.8z"/><rect x="729.1" y="553.2" width="6" height="6" fill="#7f7f7f"/><path d="M1227.0 563.6 L473.8 563.6 L471.8 563.6 L469.8 563.7 L467.8 563.7 L465.8 563.8 L463.8 564.0 L461.8 564.1 L459.8 564.3 L457.8 564.5 L455.8 564.8 L453.9 565.0 L451.9 565.3 L449.9 565.7 L447.9 566.0 L446.0 566.4 L444.0 566.8 L442.1 567.2 L440.1 567.7 L438.2 568.2 L436.3 568.7 L434.3 569.3 L432.4 569.8 L430.5 570.4 L428.6 571.1 L426.7 571.7 L424.8 572.4 L423.0 573.1 L421.1 573.8 L419.2 574.5 L417.4 575.3 L415.6 576.1 L413.7 576.9 L411.9 577.8 L410.1 578.6 L408.3 579.5 L406.6 580.4 L404.8 581.4 L403.0 582.3 L401.3 583.3 L399.5 584.3 L397.8 585.3 L396.1 586.4 L394.4 587.4 L392.7 588.5 L391.1 589.6 L389.4 590.7 L387.8 591.9 L386.1 593.0 L384.5 594.2 L382.9 595.4 L381.3 596.6 L379.8 597.8 L378.2 599.1 L376.6 600.4 L375.1 601.6 L373.6 602.9 L372.1 604.3 L370.6 605.6 L369.1 606.9 L367.6 608.3 L366.2 609.7 L364.7 611.1 L363.3 612.5 L361.9 613.9 L360.5 615.3 L359.1 616.8 L357.8 618.2 L356.4 619.7 L355.1 621.2 L353.8 622.7 L352.5 624.2 L351.2 625.7 L349.9 627.3 L348.6 628.8 L347.4 630.4 L346.1 632.0 L344.9 633.5 L343.7 635.1 L342.5 636.7 L341.3 638.4 L340.2 640.0 L339.0 641.6 L337.9 643.3 L336.8 644.9 L335.7 646.6 L334.6 648.3 L333.5 650.0 L332.4 651.6 L331.4 653.4 L330.4 655.1 L329.3 656.8 L328.3 658.5 L327.4 660.3 L326.4 662.0 L325.4 663.7 L324.5 665.5 L323.5 667.3 L322.6 669.1 L321.7 670.8 L320.8 672.6 L319.9 674.4 L319.1 676.2 L318.2 678.0 L317.4 679.9 L316.6 681.7 L315.7 683.5 L314.9 685.3 L314.2 687.2 L313.4 689.0 L312.6 690.9 L311.9 692.7 L311.2 694.6 L310.5 696.5 L309.8 698.3 L309.1 700.2 L308.4 702.1 L307.7 704.0 L307.1 705.9 L306.5 707.8 L306.1 709.1" fill="none" stroke="#6a7a88" stroke-width="1" stroke-dasharray="1 1.5" opacity="0.8"/><path fill="#6c747c" d="M760.3 562.2h2.8v2.8h-2.8zM789.9 562.2h2.8v2.8h-2.8zM819.5 562.2h2.8v2.8h-2.8zM849.1 562.2h2.8v2.8h-2.8zM878.7 562.2h2.8v2.8h-2.8zM908.3 562.2h2.8v2.8h-2.8zM937.9 562.2h2.8v2.8h-2.8zM967.5 562.2h2.8v2.8h-2.8zM997.1 562.2h2.8v2.8h-2.8zM1026.7 562.2h2.8v2.8h-2.8zM1056.3 562.2h2.8v2.8h-2.8zM1085.9 562.2h2.8v2.8h-2.8zM1115.5 562.2h2.8v2.8h-2.8zM1145.1 562.2h2.8v2.8h-2.8zM1174.7 562.2h2.8v2.8h-2.8zM1204.3 562.2h2.8v2.8h-2.8zM711.4 562.2h2.8v2.8h-2.8zM681.6 562.2h2.8v2.8h-2.8zM651.8 562.2h2.8v2.8h-2.8zM622.0 562.2h2.8v2.8h-2.8zM592.2 562.2h2.8v2.8h-2.8zM562.4 562.2h2.8v2.8h-2.8zM532.6 562.2h2.8v2.8h-2.8zM502.8 562.2h2.8v2.8h-2.8zM475.5 562.2h2.8v2.8h-2.8zM459.0 562.8h2.8v2.8h-2.8zM442.7 565.4h2.8v2.8h-2.8zM426.8 569.8h2.8v2.8h-2.8zM411.5 575.9h2.8v2.8h-2.8zM396.9 583.6h2.8v2.8h-2.8zM383.2 592.7h2.8v2.8h-2.8zM370.4 603.1h2.8v2.8h-2.8zM358.5 614.6h2.8v2.8h-2.8zM347.6 627.0h2.8v2.8h-2.8zM337.7 640.1h2.8v2.8h-2.8zM328.8 654.0h2.8v2.8h-2.8zM320.8 668.5h2.8v2.8h-2.8zM313.8 683.4h2.8v2.8h-2.8zM307.7 698.7h2.8v2.8h-2.8z"/><rect x="729.1" y="560.6" width="6" height="6" fill="#7f7f7f"/><path d="M1227.0 573.5 L473.3 573.5 L471.3 573.5 L469.3 573.6 L467.3 573.6 L465.3 573.7 L463.3 573.9 L461.3 574.1 L459.3 574.3 L457.3 574.5 L455.4 574.7 L453.4 575.0 L451.4 575.4 L449.4 575.7 L447.5 576.1 L445.5 576.5 L443.6 576.9 L441.6 577.4 L439.7 577.9 L437.7 578.4 L435.8 579.0 L433.9 579.5 L432.0 580.2 L430.1 580.8 L428.2 581.5 L426.3 582.1 L424.5 582.9 L422.6 583.6 L420.8 584.4 L418.9 585.2 L417.1 586.0 L415.3 586.8 L413.5 587.7 L411.7 588.6 L409.9 589.5 L408.2 590.4 L406.4 591.4 L404.7 592.4 L403.0 593.4 L401.2 594.4 L399.5 595.5 L397.9 596.6 L396.2 597.7 L394.5 598.8 L392.9 599.9 L391.2 601.1 L389.6 602.2 L388.0 603.4 L386.4 604.7 L384.9 605.9 L383.3 607.1 L381.8 608.4 L380.2 609.7 L378.7 611.0 L377.2 612.3 L375.7 613.7 L374.3 615.0 L372.8 616.4 L371.4 617.8 L369.9 619.2 L368.5 620.6 L367.1 622.0 L365.7 623.5 L364.4 624.9 L363.0 626.4 L361.7 627.9 L360.4 629.4 L359.1 630.9 L357.8 632.5 L356.5 634.0 L355.3 635.6 L354.0 637.1 L352.8 638.7 L351.6 640.3 L350.4 641.9 L349.2 643.5 L348.0 645.1 L346.9 646.8 L345.7 648.4 L344.6 650.1 L343.5 651.7 L342.4 653.4 L341.4 655.1 L340.3 656.8 L339.2 658.5 L338.2 660.2 L337.2 661.9 L336.2 663.7 L335.2 665.4 L334.2 667.2 L333.3 668.9 L332.3 670.7 L331.4 672.5 L330.5 674.2 L329.6 676.0 L328.7 677.8 L327.9 679.6 L327.0 681.4 L326.2 683.3 L325.3 685.1 L324.5 686.9 L323.7 688.7 L323.0 690.6 L322.2 692.4 L321.4 694.3 L320.7 696.1 L320.0 698.0 L319.3 699.9 L318.6 701.7 L317.9 703.6 L317.2 705.5 L316.6 707.4 L316.0 709.0" fill="none" stroke="#6a7a88" stroke-width="1" stroke-dasharray="1 1.5" opacity="0.8"/><path fill="#6c747c" d="M760.3 572.1h2.8v2.8h-2.8zM789.9 572.1h2.8v2.8h-2.8zM819.5 572.1h2.8v2.8h-2.8zM849.1 572.1h2.8v2.8h-2.8zM878.7 572.1h2.8v2.8h-2.8zM908.3 572.1h2.8v2.8h-2.8zM937.9 572.1h2.8v2.8h-2.8zM967.5 572.1h2.8v2.8h-2.8zM997.1 572.1h2.8v2.8h-2.8zM1026.7 572.1h2.8v2.8h-2.8zM1056.3 572.1h2.8v2.8h-2.8zM1085.9 572.1h2.8v2.8h-2.8zM1115.5 572.1h2.8v2.8h-2.8zM1145.1 572.1h2.8v2.8h-2.8zM1174.7 572.1h2.8v2.8h-2.8zM1204.3 572.1h2.8v2.8h-2.8zM711.4 572.1h2.8v2.8h-2.8zM681.6 572.1h2.8v2.8h-2.8zM651.8 572.1h2.8v2.8h-2.8zM622.0 572.1h2.8v2.8h-2.8zM592.2 572.1h2.8v2.8h-2.8zM562.4 572.1h2.8v2.8h-2.8zM532.6 572.1h2.8v2.8h-2.8zM502.8 572.1h2.8v2.8h-2.8zM475.5 572.1h2.8v2.8h-2.8zM459.0 572.7h2.8v2.8h-2.8zM442.7 575.4h2.8v2.8h-2.8zM426.9 580.0h2.8v2.8h-2.8zM411.7 586.5h2.8v2.8h-2.8zM397.4 594.6h2.8v2.8h-2.8zM383.9 604.1h2.8v2.8h-2.8zM371.5 614.9h2.8v2.8h-2.8zM360.0 626.8h2.8v2.8h-2.8zM349.6 639.6h2.8v2.8h-2.8zM340.3 653.2h2.8v2.8h-2.8zM331.9 667.4h2.8v2.8h-2.8zM324.6 682.2h2.8v2.8h-2.8zM318.3 697.4h2.8v2.8h-2.8z"/><rect x="729.1" y="570.5" width="6" height="6" fill="#7f7f7f"/><path d="M1227.0 603.2 L479.6 603.2 L477.6 603.2 L475.6 603.3 L473.6 603.4 L471.6 603.5 L469.6 603.6 L467.6 603.8 L465.6 604.0 L463.6 604.3 L461.7 604.5 L459.7 604.9 L457.7 605.2 L455.8 605.6 L453.8 606.0 L451.9 606.4 L449.9 606.9 L448.0 607.4 L446.0 608.0 L444.1 608.5 L442.2 609.1 L440.3 609.8 L438.4 610.4 L436.6 611.1 L434.7 611.9 L432.8 612.6 L431.0 613.4 L429.2 614.2 L427.4 615.0 L425.6 615.9 L423.8 616.8 L422.0 617.7 L420.2 618.7 L418.5 619.6 L416.8 620.6 L415.0 621.7 L413.3 622.7 L411.7 623.8 L410.0 624.9 L408.3 626.0 L406.7 627.2 L405.1 628.4 L403.5 629.6 L401.9 630.8 L400.3 632.0 L398.8 633.3 L397.3 634.6 L395.8 635.9 L394.3 637.2 L392.8 638.6 L391.3 640.0 L389.9 641.4 L388.5 642.8 L387.1 644.2 L385.7 645.7 L384.4 647.1 L383.0 648.6 L381.7 650.1 L380.4 651.7 L379.2 653.2 L377.9 654.8 L376.7 656.3 L375.4 657.9 L374.3 659.5 L373.1 661.1 L371.9 662.8 L370.8 664.4 L369.7 666.1 L368.6 667.8 L367.5 669.5 L366.5 671.2 L365.5 672.9 L364.5 674.6 L363.5 676.4 L362.5 678.1 L361.6 679.9 L360.7 681.7 L359.8 683.4 L358.9 685.2 L358.0 687.0 L357.2 688.9 L356.4 690.7 L355.6 692.5 L354.8 694.4 L354.1 696.2 L353.4 698.1 L352.7 700.0 L352.0 701.9 L351.3 703.7 L350.7 705.6 L350.1 707.5 L349.6 709.1" fill="none" stroke="#000" stroke-width="1" stroke-dasharray="1 1.2" opacity="0.7"/><path fill="#000" d="M730.9 602.0h2.5v2.5h-2.5zM738.3 602.0h2.5v2.5h-2.5zM745.7 602.0h2.5v2.5h-2.5zM753.1 602.0h2.5v2.5h-2.5zM760.5 602.0h2.5v2.5h-2.5zM767.9 602.0h2.5v2.5h-2.5zM775.4 602.0h2.5v2.5h-2.5zM782.8 602.0h2.5v2.5h-2.5zM790.2 602.0h2.5v2.5h-2.5zM797.6 602.0h2.5v2.5h-2.5zM805.0 602.0h2.5v2.5h-2.5zM812.5 602.0h2.5v2.5h-2.5zM819.9 602.0h2.5v2.5h-2.5zM827.3 602.0h2.5v2.5h-2.5zM834.7 602.0h2.5v2.5h-2.5zM842.1 602.0h2.5v2.5h-2.5zM849.6 602.0h2.5v2.5h-2.5zM857.0 602.0h2.5v2.5h-2.5zM864.4 602.0h2.5v2.5h-2.5zM871.8 602.0h2.5v2.5h-2.5zM879.2 602.0h2.5v2.5h-2.5zM886.7 602.0h2.5v2.5h-2.5zM894.1 602.0h2.5v2.5h-2.5zM901.5 602.0h2.5v2.5h-2.5zM908.9 602.0h2.5v2.5h-2.5zM916.3 602.0h2.5v2.5h-2.5zM923.8 602.0h2.5v2.5h-2.5zM931.2 602.0h2.5v2.5h-2.5zM938.6 602.0h2.5v2.5h-2.5zM946.0 602.0h2.5v2.5h-2.5zM953.4 602.0h2.5v2.5h-2.5zM960.9 602.0h2.5v2.5h-2.5zM968.3 602.0h2.5v2.5h-2.5zM975.7 602.0h2.5v2.5h-2.5zM983.1 602.0h2.5v2.5h-2.5zM990.5 602.0h2.5v2.5h-2.5zM998.0 602.0h2.5v2.5h-2.5zM1005.4 602.0h2.5v2.5h-2.5zM1012.8 602.0h2.5v2.5h-2.5zM1020.2 602.0h2.5v2.5h-2.5zM1027.6 602.0h2.5v2.5h-2.5zM1035.1 602.0h2.5v2.5h-2.5zM1042.5 602.0h2.5v2.5h-2.5zM1049.9 602.0h2.5v2.5h-2.5zM1057.3 602.0h2.5v2.5h-2.5zM1064.7 602.0h2.5v2.5h-2.5zM1072.2 602.0h2.5v2.5h-2.5zM1079.6 602.0h2.5v2.5h-2.5zM1087.0 602.0h2.5v2.5h-2.5zM1094.4 602.0h2.5v2.5h-2.5zM1101.8 602.0h2.5v2.5h-2.5zM1109.3 602.0h2.5v2.5h-2.5zM1116.7 602.0h2.5v2.5h-2.5zM1124.1 602.0h2.5v2.5h-2.5zM1131.5 602.0h2.5v2.5h-2.5zM1138.9 602.0h2.5v2.5h-2.5zM1146.4 602.0h2.5v2.5h-2.5zM1153.8 602.0h2.5v2.5h-2.5zM1161.2 602.0h2.5v2.5h-2.5zM1168.6 602.0h2.5v2.5h-2.5zM1176.0 602.0h2.5v2.5h-2.5zM1183.5 602.0h2.5v2.5h-2.5zM1190.9 602.0h2.5v2.5h-2.5zM1198.3 602.0h2.5v2.5h-2.5zM1205.7 602.0h2.5v2.5h-2.5zM1213.1 602.0h2.5v2.5h-2.5zM1220.6 602.0h2.5v2.5h-2.5zM723.5 602.0h2.5v2.5h-2.5zM716.1 602.0h2.5v2.5h-2.5zM708.7 602.0h2.5v2.5h-2.5zM701.3 602.0h2.5v2.5h-2.5zM693.9 602.0h2.5v2.5h-2.5zM686.5 602.0h2.5v2.5h-2.5zM679.1 602.0h2.5v2.5h-2.5zM671.7 602.0h2.5v2.5h-2.5zM664.3 602.0h2.5v2.5h-2.5zM656.9 602.0h2.5v2.5h-2.5zM649.5 602.0h2.5v2.5h-2.5zM642.1 602.0h2.5v2.5h-2.5zM634.7 602.0h2.5v2.5h-2.5zM627.3 602.0h2.5v2.5h-2.5zM619.9 602.0h2.5v2.5h-2.5zM612.5 602.0h2.5v2.5h-2.5zM605.1 602.0h2.5v2.5h-2.5zM597.7 602.0h2.5v2.5h-2.5zM590.3 602.0h2.5v2.5h-2.5zM582.9 602.0h2.5v2.5h-2.5zM575.5 602.0h2.5v2.5h-2.5zM568.1 602.0h2.5v2.5h-2.5zM560.7 602.0h2.5v2.5h-2.5zM553.3 602.0h2.5v2.5h-2.5zM545.9 602.0h2.5v2.5h-2.5zM538.5 602.0h2.5v2.5h-2.5zM531.1 602.0h2.5v2.5h-2.5zM523.7 602.0h2.5v2.5h-2.5zM516.3 602.0h2.5v2.5h-2.5zM508.9 602.0h2.5v2.5h-2.5zM501.5 602.0h2.5v2.5h-2.5zM494.1 602.0h2.5v2.5h-2.5zM486.7 602.0h2.5v2.5h-2.5zM479.3 602.0h2.5v2.5h-2.5zM471.9 602.1h2.5v2.5h-2.5zM464.5 602.7h2.5v2.5h-2.5zM457.3 603.8h2.5v2.5h-2.5zM450.1 605.3h2.5v2.5h-2.5zM443.0 607.3h2.5v2.5h-2.5zM436.0 609.6h2.5v2.5h-2.5zM429.2 612.4h2.5v2.5h-2.5zM422.6 615.5h2.5v2.5h-2.5zM416.1 619.0h2.5v2.5h-2.5zM409.9 622.9h2.5v2.5h-2.5zM403.8 627.1h2.5v2.5h-2.5zM398.0 631.6h2.5v2.5h-2.5zM392.5 636.5h2.5v2.5h-2.5zM387.2 641.6h2.5v2.5h-2.5zM382.2 646.9h2.5v2.5h-2.5zM377.4 652.5h2.5v2.5h-2.5zM372.9 658.4h2.5v2.5h-2.5zM368.7 664.4h2.5v2.5h-2.5zM364.8 670.6h2.5v2.5h-2.5zM361.2 677.0h2.5v2.5h-2.5zM357.9 683.5h2.5v2.5h-2.5zM354.8 690.2h2.5v2.5h-2.5zM352.1 697.0h2.5v2.5h-2.5z"/><rect x="729.1" y="600.2" width="6" height="6" fill="#000"/><path d="M1227.0 632.6 L477.2 632.6 L475.2 632.6 L473.2 632.7 L471.2 632.8 L469.2 633.0 L467.2 633.2 L465.2 633.4 L463.3 633.7 L461.3 634.1 L459.3 634.4 L457.4 634.9 L455.4 635.4 L453.5 635.9 L451.6 636.4 L449.7 637.0 L447.8 637.7 L445.9 638.4 L444.0 639.1 L442.2 639.9 L440.4 640.7 L438.6 641.5 L436.8 642.4 L435.0 643.3 L433.2 644.3 L431.5 645.3 L429.8 646.3 L428.1 647.4 L426.4 648.5 L424.8 649.6 L423.2 650.8 L421.6 652.0 L420.0 653.2 L418.4 654.5 L416.9 655.8 L415.4 657.1 L413.9 658.4 L412.5 659.8 L411.0 661.2 L409.7 662.7 L408.3 664.1 L406.9 665.6 L405.6 667.1 L404.3 668.6 L403.1 670.2 L401.8 671.8 L400.6 673.4 L399.5 675.0 L398.3 676.6 L397.2 678.3 L396.1 679.9 L395.0 681.6 L394.0 683.4 L393.0 685.1 L392.0 686.8 L391.1 688.6 L390.2 690.4 L389.3 692.2 L388.4 694.0 L387.6 695.8 L386.8 697.6 L386.0 699.5 L385.3 701.3 L384.6 703.2 L383.9 705.1 L383.2 707.0 L382.6 708.9 L382.5 709.0" fill="none" stroke="#6a7a88" stroke-width="1" stroke-dasharray="1 1.5" opacity="0.8"/><path fill="#6c747c" d="M760.3 631.2h2.8v2.8h-2.8zM789.9 631.2h2.8v2.8h-2.8zM819.5 631.2h2.8v2.8h-2.8zM849.1 631.2h2.8v2.8h-2.8zM878.7 631.2h2.8v2.8h-2.8zM908.3 631.2h2.8v2.8h-2.8zM937.9 631.2h2.8v2.8h-2.8zM967.5 631.2h2.8v2.8h-2.8zM997.1 631.2h2.8v2.8h-2.8zM1026.7 631.2h2.8v2.8h-2.8zM1056.3 631.2h2.8v2.8h-2.8zM1085.9 631.2h2.8v2.8h-2.8zM1115.5 631.2h2.8v2.8h-2.8zM1145.1 631.2h2.8v2.8h-2.8zM1174.7 631.2h2.8v2.8h-2.8zM1204.3 631.2h2.8v2.8h-2.8zM711.4 631.2h2.8v2.8h-2.8zM681.6 631.2h2.8v2.8h-2.8zM651.8 631.2h2.8v2.8h-2.8zM622.0 631.2h2.8v2.8h-2.8zM592.2 631.2h2.8v2.8h-2.8zM562.4 631.2h2.8v2.8h-2.8zM532.6 631.2h2.8v2.8h-2.8zM502.8 631.2h2.8v2.8h-2.8zM476.3 631.2h2.8v2.8h-2.8zM467.2 631.6h2.8v2.8h-2.8zM458.2 633.0h2.8v2.8h-2.8zM449.4 635.3h2.8v2.8h-2.8zM440.9 638.4h2.8v2.8h-2.8zM432.7 642.4h2.8v2.8h-2.8zM424.9 647.1h2.8v2.8h-2.8zM417.6 652.6h2.8v2.8h-2.8zM410.9 658.6h2.8v2.8h-2.8zM404.6 665.3h2.8v2.8h-2.8zM398.9 672.4h2.8v2.8h-2.8zM393.8 679.9h2.8v2.8h-2.8zM389.4 687.8h2.8v2.8h-2.8zM385.5 696.0h2.8v2.8h-2.8z"/><rect x="729.1" y="629.6" width="6" height="6" fill="#7f7f7f"/></svg>
</div>
<div class="t" style="left:256.5px;top:732.69px;font-size:11.5px;color:#3a3a3a;">Ground Level View</div>
<div style="position:absolute;left:378px;top:735px;width:314px;height:2px;border:1px solid #d6d9dc;background:#e7eaea;border-radius:2px"></div><div style="position:absolute;left:684px;top:727.5px;width:9px;height:19px;background:#0078d7"></div>
<div class="t" style="left:280px;top:785.09px;font-size:11.5px;color:#3a3a3a;letter-spacing:0.6px">S&lt;-W&lt;-N</div>
<div style="position:absolute;left:378px;top:788px;width:314px;height:2px;border:1px solid #d6d9dc;background:#e7eaea;border-radius:2px"></div><div style="position:absolute;left:531px;top:780.5px;width:9px;height:19px;background:#0078d7"></div>
<div class="t" style="left:729px;top:732.89px;font-size:11.5px;color:#3a3a3a;letter-spacing:0.2px">Bird Eye View</div>
<div class="le" style="left:840px;top:730px;width:61px;height:17px;line-height:17px;text-align:center;padding-left:0px">0</div>
<div class="btn" style="left:913px;top:729px;width:65px;height:18px;line-height:18px;font-size:11.5px">Reset</div>
<div class="t" style="left:742px;top:785.09px;font-size:11.5px;color:#3a3a3a;letter-spacing:0.6px">N-&gt;E-&gt;S</div>
<div class="le" style="left:840px;top:782.5px;width:61px;height:17.0px;line-height:17.0px;text-align:center;padding-left:0px">0</div>
<div class="btn" style="left:913px;top:782px;width:65px;height:17px;line-height:17px;font-size:11.5px">Reset</div>
<div class="t" style="left:1023px;top:709.29px;font-size:11.5px;color:#3a3a3a;">East</div>
<div class="le" style="left:1089px;top:707px;width:129px;height:17px;line-height:17px;text-align:left;padding-left:3px">139</div>
<div class="t" style="left:1020.5px;top:737.59px;font-size:11.5px;color:#3a3a3a;">North</div>
<div class="le" style="left:1089px;top:735px;width:129px;height:16px;line-height:16px;text-align:left;padding-left:3px">402</div>
<div class="t" style="left:991.5px;top:764.59px;font-size:11.5px;color:#3a3a3a;letter-spacing:0.1px">Up(Zoom Level)</div>
<div class="le" style="left:1089px;top:762px;width:129px;height:17px;line-height:17px;text-align:left;padding-left:3px">-50</div>
<div class="btn" style="left:1014px;top:797px;width:182px;height:18px;line-height:18px;font-size:11.5px">Reset View</div>
<div class="t" style="left:942.5px;top:838.39px;font-size:11.5px;color:#3a3a3a;">range x = [106, 172]</div>
<div style="position:absolute;left:1056px;top:835px;width:1px;height:17px;background:#a0a0a0"></div>
<div class="t" style="left:1067.5px;top:838.39px;font-size:11.5px;color:#3a3a3a;">range y = [381, 422]</div>
<div style="position:absolute;left:1182px;top:835px;width:1px;height:17px;background:#a0a0a0"></div>
<div class="t" style="left:1194px;top:838.39px;font-size:11.5px;color:#3a3a3a;">-50</div>
<div style="position:absolute;left:1219px;top:835px;width:1px;height:17px;background:#a0a0a0"></div>
<div style="position:absolute;left:1227px;top:70px;width:363px;height:782px;background:#f9f9f9;border:1px solid #e5e5e5;border-top:none"></div>
<div style="position:absolute;left:1293px;top:70px;width:298px;height:1px;background:#e5e5e5"></div>
<div style="position:absolute;left:1293px;top:54px;width:110px;height:15px;background:#f0f0f0;border:1px solid #e5e5e5;border-bottom:none;border-left:none"></div>
<div style="position:absolute;left:1404px;top:54px;width:109px;height:15px;background:#f0f0f0;border:1px solid #e5e5e5;border-bottom:none;border-left:none"></div>
<div style="position:absolute;left:1514px;top:54px;width:52px;height:15px;background:#f0f0f0;border:1px solid #e5e5e5;border-bottom:none;border-left:none"></div>
<div style="position:absolute;left:1227px;top:53px;width:65px;height:18px;background:#f9f9f9;border:1px solid #e5e5e5;border-bottom:none"></div>
<div class="t" style="left:1238.5px;top:55.09px;font-size:11.5px;color:#3a3a3a;">Property</div>
<div class="t" style="left:1303.5px;top:56.59px;font-size:11.5px;color:#3a3a3a;">Simulation Status</div>
<div class="t" style="left:1416px;top:56.59px;font-size:11.5px;color:#3a3a3a;">Batch Simulation</div>
<div style="position:absolute;left:1514px;top:54px;width:53px;height:16px;overflow:hidden"><div class="t" style="left:11.5px;top:2.59px;font-size:11.5px;color:#3a3a3a;">Simulation</div></div>
<div style="position:absolute;left:1567px;top:54px;width:11px;height:15px;background:#f6f6f6;border-radius:2px"></div>
<svg style="position:absolute;left:1569px;top:57px" width="6" height="9"><path d="M5 0.5L1 4.5L5 8.5Z" fill="#a0a0a0"/></svg>
<div style="position:absolute;left:1580px;top:53px;width:9px;height:14px;background:#fff;border:1px solid #d6d6d6;border-radius:2px"></div>
<svg style="position:absolute;left:1582px;top:56px" width="6" height="10"><path d="M1 0.5L5.5 4.8L1 9Z" fill="#000"/></svg>
<div style="position:absolute;left:1237px;top:80px;width:343px;height:760px;background:#fff;border:1px solid #8c939b"></div>
<div style="position:absolute;left:1329px;top:81px;width:1px;height:21px;background:#e6e6e6"></div>
<div style="position:absolute;left:1421px;top:81px;width:1px;height:21px;background:#e6e6e6"></div>
<div class="t" style="left:1242px;top:86.04px;font-size:11px;color:#000;">Properties</div>
<div class="t" style="left:1334px;top:86.04px;font-size:11px;color:#000;">Type</div>
<div class="t" style="left:1425.5px;top:86.04px;font-size:11px;color:#000;">Value</div></body></html>
